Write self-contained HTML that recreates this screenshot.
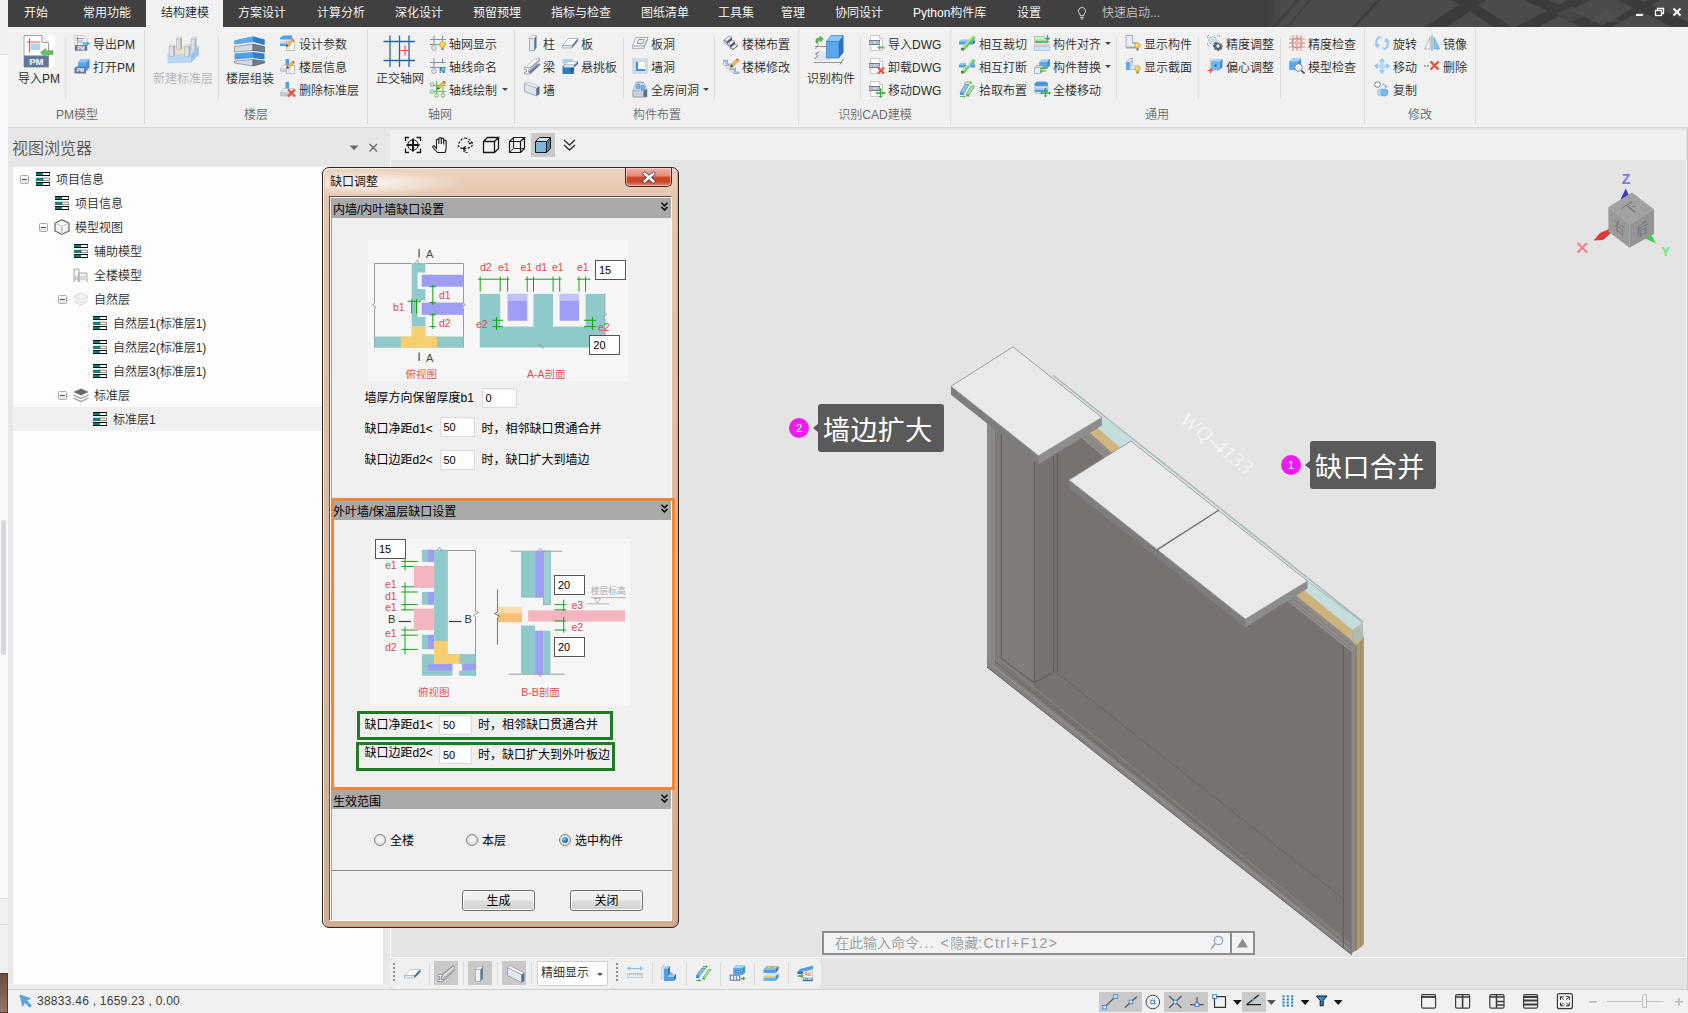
<!DOCTYPE html>
<html lang="zh-CN">
<head>
<meta charset="utf-8">
<title>结构建模 - 缺口调整</title>
<style>
*{box-sizing:border-box;margin:0;padding:0}
html,body{width:1688px;height:1013px;overflow:hidden;background:#e4e4e4}
body{position:relative;font-family:"Liberation Sans","Noto Sans CJK SC",sans-serif;font-size:12px;color:#262626;font-weight:350}
.abs{position:absolute}
svg{position:absolute;overflow:visible}
/* left background strip */
#strip{left:0;top:0;width:8px;height:1013px;background:#f9fafc}
/* tab bar */
#tabbar{left:8px;top:0;width:1680px;height:27px;background:#404040;overflow:hidden}
.tab{position:absolute;top:0;height:27px;line-height:27px;color:#fff;font-size:12px;white-space:nowrap}
#acttab{left:138px;top:0;width:77px;height:27px;background:#f1f1f1}
/* ribbon */
#ribbon{left:8px;top:27px;width:1680px;height:101px;background:#f1f1f1;border-bottom:1px solid #d9d9d9}
.rt{position:absolute;white-space:nowrap;font-size:12px;line-height:16px;color:#2b2b2b}
.rt.dis{color:#b4b4b4}
.gl{position:absolute;top:106px;white-space:nowrap;font-size:12px;line-height:16px;color:#6a6a6a;transform:translateX(-50%)}
.vs{position:absolute;width:1px;background:#dcdcdc}
.dd{position:absolute;width:0;height:0;border-left:3px solid transparent;border-right:3px solid transparent;border-top:3px solid #444}
</style>
</head>
<body>
<div id="strip" class="abs"><div class="abs" style="left:0;top:0;width:8px;height:55px;background:#f0f0f0;border-bottom:1px solid #dcdcdc"></div><div class="abs" style="left:1px;top:520px;width:5px;height:135px;background:#d5d7da;border-radius:3px"></div><div class="abs" style="left:0;top:898px;width:8px;height:76px;background:#f0f0f0;border-top:1px solid #e2e2e2"></div><div class="abs" style="left:0;top:924px;width:8px;height:1px;background:#dcdcdc"></div><div class="abs" style="left:0;top:973px;width:8px;height:40px;background:linear-gradient(180deg,#6b4c42,#94766a);border:1px solid #54382f;border-left:none"></div></div>
<div id="tabbar" class="abs">
<svg style="left:1260px;top:0" width="420" height="27" viewBox="1268 0 420 27">
<rect x="1268" y="0" width="6" height="27" fill="#434343"/><rect x="1274" y="0" width="6" height="27" fill="#474747"/><rect x="1280" y="0" width="408" height="27" fill="#4b4b4b"/>
<g fill="#3b3b3b">
<polygon points="1272,27 1276,27 1300,0 1296,0" opacity=".6"/>
<polygon points="1285,27 1288,27 1312,0 1309,0" opacity=".5"/>
<polygon points="1352,27 1356,27 1381,0 1377,0" opacity=".8"/>
<polygon points="1425,27 1447,27 1486,0 1466,0"/>
<polygon points="1452,0 1470,0 1512,27 1494,27"/>
<polygon points="1516,27 1538,27 1590,0 1568,0"/>
<polygon points="1524,0 1548,0 1606,27 1582,27"/>
<polygon points="1600,27 1612,27 1660,0 1648,0"/>
<polygon points="1618,0 1640,0 1688,22 1688,27 1672,27"/>
</g>
<g fill="#525252"><polygon points="1556,14 1572,6 1588,14 1572,22" opacity=".5"/><polygon points="1590,22 1606,10 1622,22" opacity=".6"/></g>
</svg>

<div id="acttab" class="abs"></div>
<div class="tab" style="left:16px">开始</div>
<div class="tab" style="left:75px">常用功能</div>
<div class="tab" style="left:153px;color:#1e1e1e">结构建模</div>
<div class="tab" style="left:230px">方案设计</div>
<div class="tab" style="left:309px">计算分析</div>
<div class="tab" style="left:387px">深化设计</div>
<div class="tab" style="left:465px">预留预埋</div>
<div class="tab" style="left:543px">指标与检查</div>
<div class="tab" style="left:633px">图纸清单</div>
<div class="tab" style="left:710px">工具集</div>
<div class="tab" style="left:773px">管理</div>
<div class="tab" style="left:827px">协同设计</div>
<div class="tab" style="left:905px">Python构件库</div>
<div class="tab" style="left:1009px">设置</div>
<svg style="left:1068px;top:6px" width="12" height="15" viewBox="0 0 12 15"><path d="M6 1.5a3.6 3.6 0 0 0-2 6.6v1.6h4V8.100a3.6 3.6 0 0 0-2-6.600z" fill="none" stroke="#d0d0d0" stroke-width="1"/><path d="M4.300 11.500h3.400M4.800 13h2.400" stroke="#d0d0d0" stroke-width="1"/></svg>
<div class="tab" style="left:1094px;color:#c8c8c8">快速启动...</div>
<svg style="left:1625px;top:5px" width="50" height="16" viewBox="0 0 50 16">
<rect x="3" y="9" width="7" height="2" fill="#fff"/>
<rect x="22.500" y="5.500" width="6" height="5" fill="none" stroke="#fff" stroke-width="1.300"/><path d="M24.500 5.500v-2h6v5h-2" fill="none" stroke="#fff" stroke-width="1.300"/>
<path d="M40.500 3.500l7 7M47.500 3.500l-7 7" stroke="#fff" stroke-width="1.800"/>
</svg>

</div>
<div id="ribbon" class="abs">
<svg style="left:15px;top:8px" width="32" height="32" viewBox="0 0 32 32"><rect x="0" y="0" width="32" height="32" fill="#fff"/><path d="M1 .5h18l6.500 7V32H1z" fill="#fff" stroke="#8a8a8a" stroke-width=".8"/><path d="M19 .5v7h6.500" fill="#f4f4f4" stroke="#8a8a8a" stroke-width=".8"/><path d="M6.500 3.500v14M4 7h13.500" stroke="#f0553c" stroke-width="1.200" fill="none"/><rect x="8" y="8.500" width="9" height="6.500" fill="#a8d4fa"/><rect x="1" y="20.500" width="24.500" height="11.500" fill="#64789a"/><text x="13.300" y="30" font-family="Liberation Sans,sans-serif" font-weight="bold" font-size="9.500" fill="#fff" text-anchor="middle">PM</text><path d="M17.500 17.500l5-4v2.300h7.500v3.600h-7.500v2.300z" fill="#6cc468" stroke="#3f9a3f" stroke-width=".6"/></svg><div class="rt" style="left:31px;top:44px;transform:translateX(-50%)">导入PM</div>
<div class="vs" style="left:57px;top:10px;height:62px"></div>
<svg style="left:66px;top:8px" width="16" height="16" viewBox="0 0 16 16"><path d="M1 .5h8.500l3.500 3.500V15.500H1z" fill="#fff" stroke="#b0b0b0" stroke-width=".7"/><path d="M3.500 1.500v8M2 3.500h8" stroke="#f0553c" stroke-width=".8"/><rect x="4.500" y="4.500" width="5" height="4" fill="#a8d4fa"/><rect x="1" y="10" width="12" height="5.500" fill="#64789a"/><text x="7" y="14.600" font-family="Liberation Sans,sans-serif" font-weight="bold" font-size="5" fill="#fff" text-anchor="middle">PM</text><path d="M9 7.500h4V6l3 2.500-3 2.500V9.500H9z" fill="#4f9fe6"/></svg><div class="rt" style="left:85px;top:10px">导出PM</div>
<svg style="left:66px;top:31px" width="16" height="16" viewBox="0 0 16 16"><path d="M4 4.500L7 1h8.500v8.500L12.500 13H4z" fill="#3f8fdc"/><path d="M4 4.500h8.500V13H4z" fill="#5aa9ee"/><path d="M4 4.500L7 1h8.500l-3 3.500z" fill="#8cc6f6"/><path d="M.5 10l2-1.500H12V15.500H.5z" fill="#64789a"/><text x="6.300" y="14.400" font-family="Liberation Sans,sans-serif" font-weight="bold" font-size="4.800" fill="#fff" text-anchor="middle">PM</text></svg><div class="rt" style="left:85px;top:33px">打开PM</div>
<div class="gl" style="left:69px;top:80px">PM模型</div>
<div class="vs" style="left:136px;top:3px;height:94px"></div>
<svg style="left:159px;top:10px" width="32" height="32" viewBox="0 0 32 32"><g transform="translate(0,-2.500) scale(1,1.100)"><path d="M.5 18l8-8h23.500l-8 8z" fill="#cfe4f8"/><path d="M5 17l6-6h15l-6 6z" fill="#f8e3b0"/><path d="M.5 18h23.500v8H.5z" fill="#b6d6f4"/><path d="M24 18l8-8v8l-8 8z" fill="#9cc4ea"/><g fill="#dcdfe3" stroke="#aeb4bc" stroke-width=".6"><path d="M9.500 4h4v10h-4z"/><path d="M24 4h4v10h-4z"/><path d="M2 11h4.500v9H2z"/><path d="M17.500 11h4.500v9h-4.500z"/></g><g fill="#f2f3f5" stroke="#aeb4bc" stroke-width=".5"><path d="M9.500 4l1.500-1.500h4L13.500 4z"/><path d="M24 4l1.500-1.500h4L28 4z"/><path d="M2 11l1.500-1.500h4.500L6.500 11z"/><path d="M17.500 11l1.500-1.500h4.500L22 11z"/></g><g fill="#a9afb8"><path d="M13.500 4L15 2.500v10L13.500 14z"/><path d="M28 4l1.500-1.500v10L28 14z"/><path d="M6.500 11L8 9.500v9L6.500 20z"/><path d="M22 11l1.500-1.500v9L22 20z"/></g></g></svg><div class="rt dis" style="left:175px;top:44px;transform:translateX(-50%)">新建标准层</div>
<div class="vs" style="left:210px;top:10px;height:62px"></div>
<svg style="left:226px;top:9px" width="32" height="32" viewBox="0 0 32 32"><path d="M.5 4.500L19 .5l11.500 3v5L19 5.500.5 8z" fill="#2f7fc4"/><path d="M.5 4.500L19 .5V6L.5 8.500z" fill="#5aa9ee"/><path d="M19 .5l11.500 3.500v5L19 6z" fill="#2f7fc4"/><path d="M.5 10.500L19 8v6.500L.5 16z" fill="#d3dbe6" stroke="#555" stroke-width=".5"/><path d="M19 8l11.500 2.500V16L19 14.500z" fill="#6b7c96" stroke="#444" stroke-width=".5"/><path d="M.5 17.500L19 16v6L.5 23.500z" fill="#4f9fe6"/><path d="M19 16l11.500 1.500v6L19 22z" fill="#2f7fc4"/><path d="M.5 25L19 23.500V30L.5 27z" fill="#d3dbe6" stroke="#555" stroke-width=".5"/><path d="M19 23.500l11.500 1.500V27L19 30z" fill="#6b7c96" stroke="#444" stroke-width=".5"/></svg><div class="rt" style="left:242px;top:44px;transform:translateX(-50%)">楼层组装</div>
<svg style="left:272px;top:8px" width="16" height="16" viewBox="0 0 16 16"><path d="M0 3l3-2.500h9v4H0z" fill="#4f9fe6"/><path d="M0 5.500h12V8H0z" fill="#d3dbe6"/><path d="M0 8.500h7V11H0z" fill="#4f9fe6"/><rect x="6.500" y="6.500" width="8" height="9" fill="#fff" stroke="#9aa4b2" stroke-width=".7"/><path d="M8 9h3M8 11h3M8 13h2" stroke="#9ab" stroke-width=".7"/><g transform="translate(-2.500,-.5) scale(.95)"><path d="M9 13l.8-2.800 5-5 2 2-5 5z" fill="#f6b94a" stroke="#b77a1a" stroke-width=".5"/><path d="M14.800 5.200l1-1 2 2-1 1z" fill="#e8503a"/><path d="M9 13l.8-2.800 2 2z" fill="#444"/></g></svg><div class="rt" style="left:291px;top:10px">设计参数</div>
<svg style="left:272px;top:31px" width="16" height="16" viewBox="0 0 16 16"><path d="M5.500 1h3.500v7H5.500z" fill="#4f9fe6"/><path d="M0 11l3-4h10l-3 4z" fill="#e8edf3" stroke="#9aa4b2" stroke-width=".5"/><path d="M0 11h10v3H0z" fill="#c5ced9"/><rect x="6.500" y="7.500" width="8" height="8" fill="#fff" stroke="#9aa4b2" stroke-width=".7"/><path d="M8 10h3M8 12h3M8 14h2" stroke="#9ab" stroke-width=".7"/><g transform="translate(-2,-1.500) scale(.95)"><path d="M9 13l.8-2.800 5-5 2 2-5 5z" fill="#f6b94a" stroke="#b77a1a" stroke-width=".5"/><path d="M14.800 5.200l1-1 2 2-1 1z" fill="#e8503a"/><path d="M9 13l.8-2.800 2 2z" fill="#444"/></g></svg><div class="rt" style="left:291px;top:33px">楼层信息</div>
<svg style="left:272px;top:54px" width="16" height="16" viewBox="0 0 16 16"><path d="M5.500 1h3.500v8H5.500z" fill="#4f9fe6"/><path d="M.5 12l3-4.500h10l-3 4.500z" fill="#e8edf3" stroke="#9aa4b2" stroke-width=".5"/><path d="M.5 12h10v3H.5z" fill="#c5ced9" stroke="#9aa4b2" stroke-width=".4"/><path d="M8 8.500l7 7M15 8.500l-7 7" stroke="#e8503a" stroke-width="2.300"/></svg><div class="rt" style="left:291px;top:56px">删除标准层</div>
<div class="gl" style="left:248px;top:80px">楼层</div>
<div class="vs" style="left:359px;top:3px;height:94px"></div>
<svg style="left:375px;top:8px" width="32" height="32" viewBox="0 0 32 32"><g stroke="#2a64a0" stroke-width="1.300" fill="none"><path d="M7 .5v31.500M16.500 .5v31.500M26 .5v31.500M.5 6.500h31.500M.5 25.500h31.500"/></g><path d="M22 10.500v10M17 15.500h10" stroke="#f0553c" stroke-width="1.200"/></svg><div class="rt" style="left:392px;top:44px;transform:translateX(-50%)">正交轴网</div>
<svg style="left:422px;top:8px" width="16" height="16" viewBox="0 0 16 16"><path d="M0 4.500h16M0 9.500h16M4 .5v10M12.500 .5v8" stroke="#7f93ad" stroke-width="1" fill="none"/><circle cx="4" cy="13" r="2.300" fill="#fff" stroke="#8a8f98" stroke-width=".8"/><path d="M4 12v2" stroke="#8a8f98" stroke-width=".6"/><circle cx="12.500" cy="9.500" r="3" fill="#fbc94a" stroke="#d99a1c" stroke-width=".6"/><circle cx="11.800" cy="8.700" r="1" fill="#fff3c8"/><path d="M11.200 12.500h2.600v2.500h-2.600z" fill="#8a8f98"/></svg><div class="rt" style="left:441px;top:10px">轴网显示</div>
<svg style="left:422px;top:31px" width="16" height="16" viewBox="0 0 16 16"><path d="M0 4.500h16M0 9.500h16M4 .5v10M12.500 .5v5" stroke="#7f93ad" stroke-width="1" fill="none"/><circle cx="4" cy="13" r="2.300" fill="#fff" stroke="#8a8f98" stroke-width=".8"/><path d="M4 12v2" stroke="#8a8f98" stroke-width=".6"/><text x="12" y="14.500" font-family="Liberation Sans,sans-serif" font-weight="bold" font-size="8.500" fill="#2a6fc0" text-anchor="middle">N</text></svg><div class="rt" style="left:441px;top:33px">轴线命名</div>
<svg style="left:422px;top:54px" width="16" height="16" viewBox="0 0 16 16"><path d="M0 4.500h16M0 10.500h16M6.500 0v16M13 6v10" stroke="#5cbf58" stroke-width="1" fill="none"/><g fill="#fff" stroke="#777" stroke-width=".8"><circle cx="2" cy="3.500" r="1.700"/><circle cx="13" cy="14.500" r="1.700"/></g><g fill="#fff" stroke="#3aa83a" stroke-width=".8"><circle cx="2" cy="10.500" r="1.700"/><circle cx="6.500" cy="14.500" r="1.700"/></g><g transform="translate(-2,-4.500)"><path d="M9 13l.8-2.800 5-5 2 2-5 5z" fill="#f6b94a" stroke="#b77a1a" stroke-width=".5"/><path d="M14.800 5.200l1-1 2 2-1 1z" fill="#e8503a"/><path d="M9 13l.8-2.800 2 2z" fill="#444"/></g></svg><div class="rt" style="left:441px;top:56px">轴线绘制</div>
<div class="dd" style="left:494px;top:61px"></div>
<div class="gl" style="left:432px;top:80px">轴网</div>
<div class="vs" style="left:506px;top:3px;height:94px"></div>
<svg style="left:516px;top:8px" width="16" height="16" viewBox="0 0 16 16"><path d="M5.500 3.500h5v12h-5z" fill="#e3e9f1" stroke="#8e98a8" stroke-width=".7"/><path d="M5.500 3.500l2-3h5l-2 3z" fill="#fff" stroke="#8e98a8" stroke-width=".6"/><path d="M10.500 3.500l2-3v12l-2 3z" fill="#5d7394"/></svg><div class="rt" style="left:535px;top:10px">柱</div>
<svg style="left:554px;top:8px" width="16" height="16" viewBox="0 0 16 16"><path d="M.5 10.500l6-7h9.500l-6 7z" fill="#fff" stroke="#8e98a8" stroke-width=".7"/><path d="M.5 10.500H10v2.500H.5z" fill="#e3e9f1" stroke="#8e98a8" stroke-width=".6"/><path d="M10 10.500l6-7V6l-6 7z" fill="#5d7394"/></svg><div class="rt" style="left:573px;top:10px">板</div>
<svg style="left:516px;top:31px" width="16" height="16" viewBox="0 0 16 16"><path d="M1 9.500L11 .5h5L6.500 9.500z" fill="#fff" stroke="#8e98a8" stroke-width=".6"/><path d="M.5 9.500h6v2h-2v2.500h2v2h-6v-2h2V11.500h-2z" fill="#eef1f5" stroke="#7a8494" stroke-width=".6"/><path d="M6.500 9.500L16 .5V2.500L6.500 11.500z" fill="#9aa4b4"/><path d="M4.500 14L14 5v2l-7.500 7.500v1.500z" fill="#7a8699"/><path d="M6.500 14L16 5v2l-9.500 9z" fill="#5d7394"/></svg><div class="rt" style="left:535px;top:33px">梁</div>
<svg style="left:554px;top:31px" width="16" height="16" viewBox="0 0 16 16"><path d="M.5 1h11l-3 4.500h-8z" fill="#a8d4fa"/><path d="M.5 8l8-1.500 3.500 1.500v8H.5z" fill="#2f7fc4"/><path d="M8.500 9.500l3.500-4V12l-3.500 4z" fill="#1f5f9c"/><path d="M2 7l4-3.500h10l-4 3.500z" fill="#fff" stroke="#8e98a8" stroke-width=".6"/><path d="M2 7h10v2.500H2z" fill="#e3e9f1" stroke="#8e98a8" stroke-width=".5"/><path d="M12 7l4-3.500V6l-4 3.500z" fill="#5d7394"/></svg><div class="rt" style="left:573px;top:33px">悬挑板</div>
<svg style="left:516px;top:54px" width="16" height="16" viewBox="0 0 16 16"><path d="M.5 2.500l12 4.500v8L.5 10.500z" fill="#dfe5ee" stroke="#8e98a8" stroke-width=".8"/><path d="M.5 2.500L3.500 1l12 4.500-3 1.500z" fill="#fff" stroke="#8e98a8" stroke-width=".6"/><path d="M12.500 7l3-1.500v8l-3 1.500z" fill="#5d7394"/></svg><div class="rt" style="left:535px;top:56px">墙</div>
<div class="vs" style="left:615px;top:10px;height:62px"></div>
<svg style="left:624px;top:8px" width="16" height="16" viewBox="0 0 16 16"><path d="M.5 11l3.500-8.500H16L12 11z" fill="#fff" stroke="#8e98a8" stroke-width=".8"/><path d="M5 8.500l1.500-4h6l-1.500 4z" fill="#e8ecf2" stroke="#7a8494" stroke-width=".8"/><path d="M.5 11H12v2.500H.5z" fill="#e3e9f1" stroke="#8e98a8" stroke-width=".6"/><path d="M12 11l4-8.500V5l-4 8.500z" fill="#9aa4b4"/></svg><div class="rt" style="left:643px;top:10px">板洞</div>
<svg style="left:624px;top:31px" width="16" height="16" viewBox="0 0 16 16"><rect x="0" y="0" width="16" height="16" fill="#d6dde8"/><path d="M0 3.500h16M0 8h16M0 12.500h16M3 0v16M8 0v16M13 0v16" stroke="#c2cad6" stroke-width=".6"/><rect x="4" y="4" width="9" height="9" fill="#fff"/><path d="M4 4h2v7h7v2H4z" fill="#3f8fdc"/></svg><div class="rt" style="left:643px;top:33px">墙洞</div>
<svg style="left:624px;top:54px" width="16" height="16" viewBox="0 0 16 16"><path d="M1 9l3-7.500h8L15 9v7H1z" fill="#d8dee8" stroke="#8e98a8" stroke-width=".6"/><path d="M4.500 3h3.500v4.500H4.500zM9 4.500h3.500v4H9z" fill="#6eb2ee" stroke="#3f8fdc" stroke-width=".5"/><path d="M1 9.500h10.500V16H1z" fill="#c9d1dd" stroke="#8e98a8" stroke-width=".6"/><path d="M11.500 9.500L15 8v8h-3.500z" fill="#5d7394"/><path d="M3.500 1.500L7 .5l5 1" fill="none" stroke="#8e98a8" stroke-width=".6"/></svg><div class="rt" style="left:643px;top:56px">全房间洞</div>
<div class="dd" style="left:695px;top:61px"></div>
<div class="vs" style="left:706px;top:10px;height:62px"></div>
<svg style="left:715px;top:8px" width="16" height="16" viewBox="0 0 16 16"><path d="M1 5l5-4 3 1.500L4 6.500z" fill="#eef1f5" stroke="#5a6474" stroke-width=".6"/><path d="M4 6.500l5-4v2.500L4 9z" fill="#4a5466"/><path d="M4 9l5-4 3 1.500-5 4z" fill="#eef1f5" stroke="#5a6474" stroke-width=".6"/><path d="M7 10.500l5-4V9l-5 4z" fill="#4a5466"/><path d="M7 13l5-4 3 1.500-5 4z" fill="#eef1f5" stroke="#5a6474" stroke-width=".6"/><path d="M1 5v2.500l9 7 5-4V10.500l-5 4z" fill="#c9d1dd" stroke="#5a6474" stroke-width=".5"/></svg><div class="rt" style="left:734px;top:10px">楼梯布置</div>
<svg style="left:715px;top:31px" width="16" height="16" viewBox="0 0 16 16"><path d="M.5 2h4v4h4v4h4v4h3.500v1.500h-5v-4h-4v-4h-4v-4H.5z" fill="#b6d6f4" stroke="#6a8fb8" stroke-width=".6"/><path d="M.5 2v5l11 9" fill="none" stroke="#e0a0a0" stroke-width=".8"/><g transform="translate(-1.500,-4)"><path d="M9 13l.8-2.800 5-5 2 2-5 5z" fill="#f6b94a" stroke="#b77a1a" stroke-width=".5"/><path d="M14.800 5.200l1-1 2 2-1 1z" fill="#e8503a"/><path d="M9 13l.8-2.800 2 2z" fill="#444"/></g></svg><div class="rt" style="left:734px;top:33px">楼梯修改</div>
<div class="gl" style="left:649px;top:80px">构件布置</div>
<div class="vs" style="left:790px;top:3px;height:94px"></div>
<svg style="left:806px;top:8px" width="32" height="32" viewBox="0 0 32 32"><path d="M0 25.500l4-8h16l-3.500 8z" fill="#dde3ea"/><path d="M0 27.500h28M1 11.500h12" stroke="#8a8a8a" stroke-width=".9"/><path d="M26 29.500l3.500-6M1.500 14l3-5" stroke="#8a8a8a" stroke-width=".9"/><path d="M.5 24l3-3.500-2-1.500 4-2.500" fill="none" stroke="#777" stroke-width=".9"/><path d="M12.500 6.500h12.500v16.500H12.500z" fill="#5aa9ee" stroke="#2b6fb4" stroke-width=".6"/><path d="M12.500 6.500l4.500-6h12.500l-4.500 6z" fill="#8cc6f6" stroke="#2b6fb4" stroke-width=".6"/><path d="M25 6.500l4.500-6v17L25 23z" fill="#2f74b8"/><path d="M2 8V5.500c0-1.500 1-2.500 2.500-2.500H6V1l3.500 3L6 7V5.200H4.800c-.6 0-.8.300-.8.800V8z" fill="#5cbf58" stroke="#2f8a2f" stroke-width=".5"/></svg><div class="rt" style="left:823px;top:44px;transform:translateX(-50%)">识别构件</div>
<div class="vs" style="left:852px;top:10px;height:62px"></div>
<svg style="left:861px;top:8px" width="16" height="16" viewBox="0 0 16 16"><path d="M1.500 .5h9l3 3V15.500H1.500z" fill="#fff" stroke="#b4b4b4" stroke-width=".7"/><path d="M10.500 .5v3h3" fill="#f0f0f0" stroke="#b4b4b4" stroke-width=".7"/><rect x="0" y="5" width="11" height="5" fill="#6a7b98"/><text x="5.500" y="9.200" font-family="Liberation Sans,sans-serif" font-weight="bold" font-size="4.200" fill="#fff" text-anchor="middle">DWG</text><path d="M8 12.500l3-2.500v1.500h4.500v2H11V15z" fill="#5cbf58"/></svg><div class="rt" style="left:880px;top:10px">导入DWG</div>
<svg style="left:861px;top:31px" width="16" height="16" viewBox="0 0 16 16"><path d="M1.500 .5h9l3 3V15.500H1.500z" fill="#fff" stroke="#b4b4b4" stroke-width=".7"/><path d="M10.500 .5v3h3" fill="#f0f0f0" stroke="#b4b4b4" stroke-width=".7"/><rect x="0" y="5" width="11" height="5" fill="#6a7b98"/><text x="5.500" y="9.200" font-family="Liberation Sans,sans-serif" font-weight="bold" font-size="4.200" fill="#fff" text-anchor="middle">DWG</text><path d="M9 9.500l6 6M15 9.500l-6 6" stroke="#e8503a" stroke-width="2.200"/></svg><div class="rt" style="left:880px;top:33px">卸载DWG</div>
<svg style="left:861px;top:54px" width="16" height="16" viewBox="0 0 16 16"><path d="M1.500 .5h9l3 3V15.500H1.500z" fill="#fff" stroke="#b4b4b4" stroke-width=".7"/><path d="M10.500 .5v3h3" fill="#f0f0f0" stroke="#b4b4b4" stroke-width=".7"/><rect x="0" y="5" width="11" height="5" fill="#6a7b98"/><text x="5.500" y="9.200" font-family="Liberation Sans,sans-serif" font-weight="bold" font-size="4.200" fill="#fff" text-anchor="middle">DWG</text><path d="M11.500 8v8M7.500 12h8" stroke="#3aa83a" stroke-width="1.400"/><path d="M11.500 7l-1.800 2h3.600zM11.500 17l-1.800-2h3.600zM6.500 12l2-1.800v3.600zM16.500 12l-2-1.800v3.600z" fill="#3aa83a"/></svg><div class="rt" style="left:880px;top:56px">移动DWG</div>
<div class="gl" style="left:867px;top:80px">识别CAD建模</div>
<div class="vs" style="left:942px;top:3px;height:94px"></div>
<svg style="left:951px;top:8px" width="16" height="16" viewBox="0 0 16 16"><path d="M0 6.500l2-2h14l-2 2z" fill="#8cc6f6"/><path d="M0 6.500h14v3H0z" fill="#4f9fe6"/><path d="M14 6.500l2-2v3l-2 2z" fill="#2f74b8"/><path d="M2 13L13 1h3L5 13z" fill="#a9e09a"/><path d="M2 13h3v2.500H2z" fill="#3f9a3f"/><path d="M5 13L16 1v2.500L5 15.500z" fill="#5cbf58"/></svg><div class="rt" style="left:971px;top:10px">相互裁切</div>
<svg style="left:1026px;top:8px" width="16" height="16" viewBox="0 0 16 16"><rect x=".5" y="1.500" width="10" height="2.500" fill="#eaf6e6" stroke="#7fbf72" stroke-width=".7"/><rect x=".5" y="5.500" width="14" height="2.500" fill="#5cbf58"/><rect x=".5" y="9" width="15" height="2" fill="#f6d8d4" stroke="#e0a09a" stroke-width=".5"/><rect x=".5" y="11.500" width="15" height="4" fill="#cfe4f8" stroke="#8cb8e0" stroke-width=".6"/><path d="M13.500 0v4.500M11.500 3l2 2.500 2-2.500z" fill="#3f8fdc" stroke="#3f8fdc" stroke-width="1"/></svg><div class="rt" style="left:1045px;top:10px">构件对齐</div>
<div class="dd" style="left:1097px;top:15px"></div>
<svg style="left:951px;top:31px" width="16" height="16" viewBox="0 0 16 16"><path d="M0 7l2-2h5v4.500H0z" fill="#4f9fe6"/><path d="M10 5h6v4.500h-5z" fill="#4f9fe6"/><path d="M0 7l2-2h5l-1 2zM10 5h6l-1.500 2h-5z" fill="#8cc6f6"/><path d="M2 13L7.500 7l2.500.5L5 13zM9.500 5.500L13 1h3l-4 4.500z" fill="#a9e09a"/><path d="M2 13h3v2.500H2z" fill="#3f9a3f"/><path d="M5 13l5-5.500V10L5 15.500zM12 5.500L16 1v2.500l-4 4.500z" fill="#5cbf58"/></svg><div class="rt" style="left:971px;top:33px">相互打断</div>
<svg style="left:1026px;top:31px" width="16" height="16" viewBox="0 0 16 16"><path d="M5.500 4l3-3h7.500v6.500l-3 3H5.500z" fill="#3f8fdc"/><path d="M5.500 4h7.500v6.500H5.500z" fill="#5aa9ee"/><path d="M5.500 4l3-3h7.500l-3 3z" fill="#a8d4fa"/><path d="M.5 9.500l2-2h6v6l-2 2h-6z" fill="#c5ced9" stroke="#8e98a8" stroke-width=".5"/><path d="M.5 9.500h6v6h-6z" fill="#e8edf3" stroke="#8e98a8" stroke-width=".5"/><path d="M6.500 10.500h6l-1.500-1.500M12 13H6l1.500 1.500" fill="none" stroke="#3aa83a" stroke-width="1"/></svg><div class="rt" style="left:1045px;top:33px">构件替换</div>
<div class="dd" style="left:1097px;top:38px"></div>
<svg style="left:951px;top:54px" width="16" height="16" viewBox="0 0 16 16"><path d="M1 12L6 3.500h4L5 12z" fill="#8cc6f6" stroke="#2f74b8" stroke-width=".6"/><path d="M1 12h4v2H1z" fill="#4f9fe6"/><path d="M7 13.500L12 5h3.500L10.500 13.500z" fill="#a9e09a" stroke="#3f9a3f" stroke-width=".6"/><path d="M7 13.500h3.500v2H7z" fill="#5cbf58"/><path d="M5 2.500c2-2 5-2 7.500-.5L11.500 .5M12.500 2L11 3.500" fill="none" stroke="#3aa83a" stroke-width=".9"/><path d="M1 15.500h5l-1.200-1.200M6 15.500l-1.200 1" fill="none" stroke="#3aa83a" stroke-width=".8"/></svg><div class="rt" style="left:971px;top:56px">拾取布置</div>
<svg style="left:1026px;top:54px" width="16" height="16" viewBox="0 0 16 16"><path d="M.5 3l2-2.500h9.500l2 2V5H.5z" fill="#4f9fe6"/><path d="M.5 3h11.500l2-.5" stroke="#2f74b8" stroke-width=".5" fill="none"/><path d="M.5 5.500h13.500V8H.5z" fill="#d3dbe6" stroke="#8e98a8" stroke-width=".4"/><path d="M.5 8.500h13.500V11H.5z" fill="#4f9fe6"/><path d="M.5 11.500H9V13H.5z" fill="#c5ced9"/><path d="M11.500 7.500v8.500M7 12h9" stroke="#3aa83a" stroke-width="1.300"/><path d="M11.500 6.500L9.800 8.500h3.400zM11.500 16.500l-1.700-2h3.400zM6 12l2-1.700v3.400zM17 12l-2-1.700v3.400z" fill="#3aa83a"/></svg><div class="rt" style="left:1045px;top:56px">全楼移动</div>
<div class="vs" style="left:1108px;top:10px;height:62px"></div>
<svg style="left:1117px;top:8px" width="16" height="16" viewBox="0 0 16 16"><path d="M1 .5h4.500l2-0 0 8h6V12H1z" fill="#e8edf3" stroke="#8e98a8" stroke-width=".7"/><path d="M5.500 .5L8 2v6.500h5.500L11 7H7.500V2z" fill="#aab4c4"/><path d="M1 12h12.500v1.500H1z" fill="#9aa4b4"/><circle cx="12.500" cy="10.500" r="2.800" fill="#fbc94a" stroke="#d99a1c" stroke-width=".6"/><circle cx="11.800" cy="9.700" r=".9" fill="#fff3c8"/><path d="M11.300 13.300h2.400v2.200h-2.400z" fill="#7a8494"/></svg><div class="rt" style="left:1136px;top:10px">显示构件</div>
<svg style="left:1117px;top:31px" width="16" height="16" viewBox="0 0 16 16"><path d="M1 4.500L5 .5h3v7h5.500L13 12H1z" fill="#4f9fe6"/><path d="M1 4.500L5 .5h3L4.500 4.500z" fill="#e8edf3" stroke="#8e98a8" stroke-width=".5"/><path d="M4.500 4.500L8 .5v7l-3.500 4z" fill="#c5ced9"/><path d="M1 4.500h3.500V12H1z" fill="#5aa9ee"/><path d="M4.500 11.500L8 7.500h5.500L10 11.500z" fill="#e8edf3"/><circle cx="12.500" cy="10.500" r="2.800" fill="#fbc94a" stroke="#d99a1c" stroke-width=".6"/><circle cx="11.800" cy="9.700" r=".9" fill="#fff3c8"/><path d="M11.300 13.300h2.400v2.200h-2.400z" fill="#7a8494"/></svg><div class="rt" style="left:1136px;top:33px">显示截面</div>
<div class="vs" style="left:1190px;top:10px;height:62px"></div>
<svg style="left:1199px;top:8px" width="16" height="16" viewBox="0 0 16 16"><path d="M.5 3V.5H3M10 .5h2.500V3M.5 8v2.500H3" fill="none" stroke="#8a8f98" stroke-width=".8" stroke-dasharray="1.500 1"/><circle cx="5.500" cy="5.500" r="3.800" fill="#eaf3fc" stroke="#7fb0e0" stroke-width=".8"/><circle cx="5.500" cy="5.500" r="1.500" fill="none" stroke="#7fb0e0" stroke-width=".7"/><g transform="translate(11,11)"><path d="M-1-5h2l.4 1.400 1.300.6 1.300-.7 1.400 1.400-.7 1.300.6 1.300L7-1v2l-1.400.4-.6 1.300.7 1.300-1.400 1.400-1.300-.7-1.300.6L1 7h-2l-.4-1.400-1.300-.6-1.300.7-1.400-1.400.7-1.300-.6-1.300L-7 1v-2l1.400-.4.6-1.300-.7-1.300 1.400-1.400 1.300.7 1.300-.6z" transform="scale(.72)" fill="#555d6b"/><circle r="1.700" fill="#f1f1f1"/></g></svg><div class="rt" style="left:1218px;top:10px">精度调整</div>
<svg style="left:1199px;top:31px" width="16" height="16" viewBox="0 0 16 16"><path d="M4 3.500L6.500 1H15.500v8L13 11.500H4z" fill="#3f8fdc"/><path d="M4 3.500h9v8H4z" fill="#6eb2ee"/><path d="M4 3.500L6.500 1h9L13 3.500z" fill="#a8d4fa"/><rect x="7.500" y="6.500" width="2" height="2" fill="#2a5fa0"/><path d="M0 12.500h13M3.500 0v16" stroke="#9aa4b4" stroke-width=".7" stroke-dasharray="1.500 1"/><path d="M1 12.500h5M3.500 10v5" stroke="#e8503a" stroke-width="1"/><circle cx="3.500" cy="12.500" r="1.300" fill="#e8503a"/></svg><div class="rt" style="left:1218px;top:33px">偏心调整</div>
<div class="vs" style="left:1272px;top:10px;height:62px"></div>
<svg style="left:1281px;top:8px" width="16" height="16" viewBox="0 0 16 16"><rect x="0" y="0" width="16" height="16" fill="#ececec"/><g stroke="#f08a7a" stroke-width="1"><path d="M4 0v16M8 0v16M12 0v16M0 4h16M0 8h16M0 12h16"/></g><circle cx="8" cy="8" r="5" fill="none" stroke="#8a8f98" stroke-width=".8"/><rect x="6" y="6" width="4" height="4" fill="#f6b0a6"/></svg><div class="rt" style="left:1300px;top:10px">精度检查</div>
<svg style="left:1281px;top:31px" width="16" height="16" viewBox="0 0 16 16"><path d="M.5 3.500L3.500 .5h8.500v8.500l-3 3H.5z" fill="#3f8fdc"/><path d="M.5 3.500H9V12H.5z" fill="#5aa9ee"/><path d="M.5 3.500L3.500 .5H12L9 3.500z" fill="#a8d4fa"/><circle cx="9.500" cy="9.500" r="3.800" fill="#eef6fd" stroke="#7a8494" stroke-width="1"/><path d="M12.300 12.300l3.200 3.200" stroke="#555d6b" stroke-width="1.800"/></svg><div class="rt" style="left:1300px;top:33px">模型检查</div>
<div class="gl" style="left:1149px;top:80px">通用</div>
<div class="vs" style="left:1356px;top:3px;height:94px"></div>
<svg style="left:1366px;top:8px" width="16" height="16" viewBox="0 0 16 16"><path d="M6.500 1.500C2.500 2.500 1 7 3 11" fill="none" stroke="#93c6f2" stroke-width="2"/><path d="M.5 9.500l3 4 2.500-4.500z" fill="#93c6f2"/><path d="M9.500 14.500c4-1 5.500-5.500 3.500-9.500" fill="none" stroke="#93c6f2" stroke-width="2"/><path d="M15.500 6.500l-3-4-2.500 4.500z" fill="#93c6f2"/><path d="M5 1l4 1.500-2 2zM11 15l-4-1.500 2-2z" fill="#b8dcfa"/></svg><div class="rt" style="left:1385px;top:10px">旋转</div>
<svg style="left:1416px;top:8px" width="16" height="16" viewBox="0 0 16 16"><path d="M8 0v16" stroke="#8a8f98" stroke-width="1"/><path d="M6 2.500V14H.5z" fill="#fafafa" stroke="#9a9fa8" stroke-width=".7"/><path d="M10 2.500V14h5.500z" fill="#8cc6f6" stroke="#4f9fe6" stroke-width=".8"/></svg><div class="rt" style="left:1435px;top:10px">镜像</div>
<svg style="left:1366px;top:31px" width="16" height="16" viewBox="0 0 16 16"><path d="M8 2v12M2 8h12" stroke="#8fc4f0" stroke-width="2.600"/><path d="M8 0L5 4h6zM8 16l-3-4h6zM0 8l4-3v6zM16 8l-4-3v6z" fill="#8fc4f0"/><path d="M8 3v10M3 8h10" stroke="#d4eafb" stroke-width="1"/></svg><div class="rt" style="left:1385px;top:33px">移动</div>
<svg style="left:1416px;top:31px" width="16" height="16" viewBox="0 0 16 16"><path d="M0 8h5" stroke="#8a8f98" stroke-width="1.400" stroke-dasharray="2 1"/><path d="M6.500 3.500l8 8M14.500 3.500l-8 8" stroke="#e8503a" stroke-width="2.400"/></svg><div class="rt" style="left:1435px;top:33px">删除</div>
<svg style="left:1366px;top:54px" width="16" height="16" viewBox="0 0 16 16"><circle cx="3.500" cy="3.500" r="2.800" fill="#fff" stroke="#555" stroke-width=".8"/><circle cx="7" cy="11.500" r="3.600" fill="#a8d4fa" stroke="#7db8ee" stroke-width=".6"/><circle cx="10.500" cy="11.500" r="3.600" fill="#7db8ee" stroke="#5a9fdc" stroke-width=".6"/><path d="M8 3c2 0 3.500 1 4 3" fill="none" stroke="#4f9fe6" stroke-width="1"/><path d="M10.500 5.500l1.700 1.500 1.300-2z" fill="#4f9fe6"/></svg><div class="rt" style="left:1385px;top:56px">复制</div>
<div class="gl" style="left:1412px;top:80px">修改</div>
<div class="vs" style="left:1467px;top:3px;height:94px"></div>
</div>
<style>
#lp{left:8px;top:128px;width:382px;height:861px;background:#e7e7e7}
#lph{left:4px;top:11px;font-size:16px;line-height:20px;color:#555;white-space:nowrap}
#tree{left:5px;top:39px;width:370px;height:817px;background:#fdfdfd}
.tr{position:absolute;left:0;width:370px;height:24px}
.tr.sel{background:#f0f0f0}
.tt{position:absolute;top:5px;font-size:12px;line-height:16px;white-space:nowrap;color:#2b2b2b}
.ex{position:absolute;top:8px;width:9px;height:9px;border:1px solid #a9a9a9;border-radius:1.5px;background:linear-gradient(#fff,#e4e4e4)}
.ex:after{content:"";position:absolute;left:1px;top:3px;width:5px;height:1px;background:#3a47a8}
</style>
<div id="lp" class="abs">
<div id="lph" class="abs">视图浏览器</div>
<svg style="left:341px;top:15px" width="30" height="10" viewBox="0 0 30 10"><path d="M0.500 2.500h9l-4.500 4.500z" fill="#666"/><path d="M20.500 1l7.500 7.500M28 1l-7.500 7.500" stroke="#6a6a6a" stroke-width="1.400"/></svg>
<div id="tree" class="abs">
<div class="tr" style="top:0px"><div class="ex" style="left:7px"></div><svg style="left:23px;top:5px" width="14" height="14" viewBox="0 0 14 14"><rect x="0" y="0" width="14" height="4" fill="#0a0a0a"/><rect x="0" y="1" width="7" height="2" fill="#0e8080"/><rect x="7" y="1" width="6.300" height="2" fill="#fff"/><rect x="0" y="5.800" width="7" height="3.200" fill="#0e8080"/><rect x="7" y="6.100" width="6.600" height="2.600" fill="#fff" stroke="#444" stroke-width=".6"/><rect x="0" y="10" width="14" height="4" fill="#0a0a0a"/><rect x="0" y="11" width="7" height="2" fill="#0e8080"/><rect x="7" y="11" width="6.300" height="2" fill="#fff"/></svg><div class="tt" style="left:43px">项目信息</div></div>
<div class="tr" style="top:24px"><svg style="left:42px;top:5px" width="14" height="14" viewBox="0 0 14 14"><rect x="0" y="0" width="14" height="4" fill="#0a0a0a"/><rect x="0" y="1" width="7" height="2" fill="#0e8080"/><rect x="7" y="1" width="6.300" height="2" fill="#fff"/><rect x="0" y="5.800" width="7" height="3.200" fill="#0e8080"/><rect x="7" y="6.100" width="6.600" height="2.600" fill="#fff" stroke="#444" stroke-width=".6"/><rect x="0" y="10" width="14" height="4" fill="#0a0a0a"/><rect x="0" y="11" width="7" height="2" fill="#0e8080"/><rect x="7" y="11" width="6.300" height="2" fill="#fff"/></svg><div class="tt" style="left:62px">项目信息</div></div>
<div class="tr" style="top:48px"><div class="ex" style="left:26px"></div><svg style="left:41px;top:4px" width="16" height="16" viewBox="0 0 16 16"><path d="M8 .8L15 4v8L8 15.500 1 12V4z" fill="#fafafa" stroke="#555" stroke-width="1.100"/><path d="M1 4L8 7.300 15 4" fill="none" stroke="#bbb" stroke-width="1"/><path d="M8 7.300v8" stroke="#c8c8c8" stroke-width="2"/><path d="M3 10.500l.1 0M5 12l.1 0M11 12l.1 0M13 10.500l.1 0" stroke="#aaa" stroke-width="1" stroke-linecap="round"/></svg><div class="tt" style="left:62px">模型视图</div></div>
<div class="tr" style="top:72px"><svg style="left:61px;top:5px" width="14" height="14" viewBox="0 0 14 14"><rect x="0" y="0" width="14" height="4" fill="#0a0a0a"/><rect x="0" y="1" width="7" height="2" fill="#0e8080"/><rect x="7" y="1" width="6.300" height="2" fill="#fff"/><rect x="0" y="5.800" width="7" height="3.200" fill="#0e8080"/><rect x="7" y="6.100" width="6.600" height="2.600" fill="#fff" stroke="#444" stroke-width=".6"/><rect x="0" y="10" width="14" height="4" fill="#0a0a0a"/><rect x="0" y="11" width="7" height="2" fill="#0e8080"/><rect x="7" y="11" width="6.300" height="2" fill="#fff"/></svg><div class="tt" style="left:81px">辅助模型</div></div>
<div class="tr" style="top:96px"><svg style="left:60px;top:4px" width="16" height="16" viewBox="0 0 16 16"><path d="M1 15V2h5v13M6 15V6h8v9" fill="#f2f2f2" stroke="#aaa" stroke-width="1"/><path d="M2.500 9v4M4.500 9v4M8 9v4M10 9v4M12 9v4" stroke="#bbb" stroke-width="1"/></svg><div class="tt" style="left:81px">全楼模型</div></div>
<div class="tr" style="top:120px"><div class="ex" style="left:45px"></div><svg style="left:60px;top:4px" width="16" height="16" viewBox="0 0 16 16"><path d="M8 2l7 3.500-7 3.500-7-3.500z" fill="#f4f4f4" stroke="#ccc" stroke-width=".8"/><path d="M1 8l7 3.500 7-3.500M1 10.500l7 3.500 7-3.500" fill="none" stroke="#d4d4d4" stroke-width=".9"/></svg><div class="tt" style="left:81px">自然层</div></div>
<div class="tr" style="top:144px"><svg style="left:80px;top:5px" width="14" height="14" viewBox="0 0 14 14"><rect x="0" y="0" width="14" height="4" fill="#0a0a0a"/><rect x="0" y="1" width="7" height="2" fill="#0e8080"/><rect x="7" y="1" width="6.300" height="2" fill="#fff"/><rect x="0" y="5.800" width="7" height="3.200" fill="#0e8080"/><rect x="7" y="6.100" width="6.600" height="2.600" fill="#fff" stroke="#444" stroke-width=".6"/><rect x="0" y="10" width="14" height="4" fill="#0a0a0a"/><rect x="0" y="11" width="7" height="2" fill="#0e8080"/><rect x="7" y="11" width="6.300" height="2" fill="#fff"/></svg><div class="tt" style="left:100px">自然层1(标准层1)</div></div>
<div class="tr" style="top:168px"><svg style="left:80px;top:5px" width="14" height="14" viewBox="0 0 14 14"><rect x="0" y="0" width="14" height="4" fill="#0a0a0a"/><rect x="0" y="1" width="7" height="2" fill="#0e8080"/><rect x="7" y="1" width="6.300" height="2" fill="#fff"/><rect x="0" y="5.800" width="7" height="3.200" fill="#0e8080"/><rect x="7" y="6.100" width="6.600" height="2.600" fill="#fff" stroke="#444" stroke-width=".6"/><rect x="0" y="10" width="14" height="4" fill="#0a0a0a"/><rect x="0" y="11" width="7" height="2" fill="#0e8080"/><rect x="7" y="11" width="6.300" height="2" fill="#fff"/></svg><div class="tt" style="left:100px">自然层2(标准层1)</div></div>
<div class="tr" style="top:192px"><svg style="left:80px;top:5px" width="14" height="14" viewBox="0 0 14 14"><rect x="0" y="0" width="14" height="4" fill="#0a0a0a"/><rect x="0" y="1" width="7" height="2" fill="#0e8080"/><rect x="7" y="1" width="6.300" height="2" fill="#fff"/><rect x="0" y="5.800" width="7" height="3.200" fill="#0e8080"/><rect x="7" y="6.100" width="6.600" height="2.600" fill="#fff" stroke="#444" stroke-width=".6"/><rect x="0" y="10" width="14" height="4" fill="#0a0a0a"/><rect x="0" y="11" width="7" height="2" fill="#0e8080"/><rect x="7" y="11" width="6.300" height="2" fill="#fff"/></svg><div class="tt" style="left:100px">自然层3(标准层1)</div></div>
<div class="tr" style="top:216px"><div class="ex" style="left:45px"></div><svg style="left:60px;top:4px" width="16" height="16" viewBox="0 0 16 16"><path d="M8 1.500l7.500 3.500-7.500 3.500-7.500-3.500z" fill="#6a6a6a"/><path d="M.5 8l7.500 3.500 7.500-3.500M.5 11l7.500 3.500 7.500-3.500" fill="none" stroke="#9a9a9a" stroke-width="1.200"/></svg><div class="tt" style="left:81px">标准层</div></div>
<div class="tr sel" style="top:240px"><svg style="left:80px;top:5px" width="14" height="14" viewBox="0 0 14 14"><rect x="0" y="0" width="14" height="4" fill="#0a0a0a"/><rect x="0" y="1" width="7" height="2" fill="#0e8080"/><rect x="7" y="1" width="6.300" height="2" fill="#fff"/><rect x="0" y="5.800" width="7" height="3.200" fill="#0e8080"/><rect x="7" y="6.100" width="6.600" height="2.600" fill="#fff" stroke="#444" stroke-width=".6"/><rect x="0" y="10" width="14" height="4" fill="#0a0a0a"/><rect x="0" y="11" width="7" height="2" fill="#0e8080"/><rect x="7" y="11" width="6.300" height="2" fill="#fff"/></svg><div class="tt" style="left:100px">标准层1</div></div>
</div></div>
<style>
#vtb{left:390px;top:130px;width:1296px;height:30px;background:#f0f0f0}
#vp{left:390px;top:160px;width:1297px;height:798px;background:#e4e4e4;border:1px solid #fafafa;border-top:none}
#redge{left:1687px;top:128px;width:1px;height:861px;background:#c8c8c8}
.co{position:absolute;background:#5a5a5a;border-radius:3px;color:#fff;font-size:27px;line-height:54px;height:48px;width:126px;padding-left:5px;white-space:nowrap;letter-spacing:.4px;font-weight:400}
.co:before{content:"";position:absolute;left:-5px;top:19px;border-right:6px solid #595959;border-top:5px solid transparent;border-bottom:5px solid transparent}
.cn{position:absolute;width:20px;height:20px;border-radius:50%;background:#f21af0;color:#fff;font-size:11px;line-height:20px;text-align:center}
#cmd{left:822px;top:931px;width:433px;height:24px;border:2px solid #8e8e8e;background:#f3f3f3}
#cmd .t{position:absolute;left:11px;top:0;line-height:20px;font-size:14px;color:#9a9a9a;white-space:nowrap}
</style>
<div id="vtb" class="abs"></div>
<div id="vp" class="abs"></div>
<div id="redge" class="abs"></div>
<!--MODEL--><svg style="left:0;top:0" width="1688" height="1013" viewBox="0 0 1688 1013">
<path d="M1053 375.400L1363 622" stroke="#a9bcbc" stroke-width="1.600" fill="none"/>
<polygon points="1343,634 1351,640 1351,953.500 1343,947.500" fill="#777170"/>
<polygon points="1351,646 1356,642 1356,950.500 1351,953.500" fill="#8d8987"/>
<polygon points="1356,641 1364,636 1364,944.500 1356,951" fill="#ad9972"/>
<path d="M1361 640V947" stroke="#9a875f" stroke-width="1.200"/>
<polygon points="987,392 1085,429 1110,449 1245,627 1285,599 1345,645 1345,948 987,667" fill="#777170"/>
<polygon points="1057,440 1110,449 1290,600 1345,645 1345,948 1057,722" fill="#777170"/>
<polygon points="987,367.0 995.500,373.7 995.500,673.7 987,667.0" fill="#8d8987"/>
<polygon points="995.500,373.7 1001.300,378.3 1001.300,678.3 995.500,673.7" fill="#7f7b79"/>
<polygon points="1001.300,378.3 1034.200,404.1 1034.200,682.700 1001.300,658.300" fill="#817c79"/>
<polygon points="1001.300,658.300 1034.200,682.700 1034.200,704.1 1001.300,678.3" fill="#7b7775"/>
<polygon points="1034.200,404.1 1057.300,422.3 1057.300,722.3 1034.200,704.1" fill="#777170"/>
<path d="M992 370.9V670.9" stroke="#858180" stroke-width="1"/>
<path d="M995.5 373.7V673.7" stroke="#76726f" stroke-width="1"/>
<path d="M1001.3 378.3V658.3" stroke="#5f5b59" stroke-width="1"/>
<path d="M1034.2 404.1V682.7" stroke="#5f5b59" stroke-width="1"/>
<path d="M1053.5 419.3V672.4" stroke="#625e5c" stroke-width="1"/>
<path d="M1057.3 422.3V672.0" stroke="#625e5c" stroke-width="1"/>
<path d="M1001.300 658.300L1034.200 682.700L1053.500 672.400" fill="none" stroke="#5f5b59" stroke-width="1"/>
<path d="M1055 671.400L1344.500 899.800" stroke="#67635f" stroke-width="1"/>
<polygon points="987,659 995.500,665.500 1350,944 1352,955 987,667" fill="#85817f"/>
<path d="M987.0 667.0L1352.0 955.0" stroke="#6a6664" stroke-width="1"/>
<path d="M990.6 664.0L1352.0 951.7" stroke="#9a9694" stroke-width="1"/>
<path d="M994.2 661.0L1352.0 948.4" stroke="#6f6b69" stroke-width="1"/>
<path d="M997.8 658.0L1352.0 945.1" stroke="#8d8987" stroke-width="1"/>
<path d="M1343.300 636V947.500" stroke="#5f5b59" stroke-width="1"/>
<path d="M1351 648V953M1356 645V950.500" stroke="#6f6b69" stroke-width=".8"/>
<polygon points="1101.800,417.400 1103.500,416.500 1134,441 1122,449 1097.400,427.800" fill="#c6dddd"/>
<polygon points="1085.500,428.800 1093.400,424.800 1097.400,427.800 1122,449 1113,454" fill="#d0b67e"/>
<polygon points="1085.500,428.800 1093.400,424.800 1098,428.500 1090.500,433" fill="#bfa468"/>
<polygon points="1077,434 1085.500,428.800 1113,454 1106,459" fill="#928e8c"/>
<path d="M1080 432.500L1108 457M1082.500 431L1110.500 455.500" stroke="#7b7775" stroke-width=".8"/>
<polygon points="1290,595 1304,589 1360,628 1363.500,638 1351,651 1337,640.500" fill="#ccb27c"/>
<polygon points="1284,598.500 1292.800,592.800 1345.200,634.800 1356,645 1351,651 1337,640.500" fill="#8f8b89"/>
<path d="M1286 597L1352 649.500M1288.500 595L1354 647" stroke="#7b7775" stroke-width=".8"/>
<polygon points="1292.800,592.800 1298.300,588.400 1352.600,629.900 1363.500,638 1356,643.500 1345.200,634.800" fill="#ccb27c"/>
<polygon points="1304,590 1307.500,581 1362.400,622.400 1352.600,629.900" fill="#c5dddd"/>
<polygon points="1352.600,629.900 1362.400,622.400 1363.500,638 1356,643.500 1352.600,641" fill="#a9bdb6" fill-opacity=".75"/>
<path d="M1307.500 581L1362.400 622.400V638M1352.600 629.900V641" stroke="#9fb5b5" stroke-width=".9" fill="none"/>
<polygon points="951,386.300 1038.500,455.800 1038.500,464.400 951,394.800" fill="#7d7d7d"/>
<polygon points="1038.500,455.800 1101.800,417.400 1101.800,425.400 1038.500,464.400" fill="#8c8c8c"/>
<polygon points="951,386.300 1013,346.800 1101.800,417.400 1038.500,455.800" fill="#e9e9e9" stroke="#8d9797" stroke-width=".9"/>
<polygon points="1069,480 1245.400,619.200 1245.400,627.400 1069,488" fill="#7d7d7d"/>
<polygon points="1245.400,619.200 1307.500,581 1307.500,588.400 1245.400,627.400" fill="#8c8c8c"/>
<polygon points="1069,480 1131,441 1307.500,581 1245.400,619.200" fill="#e9e9e9" stroke="#8d9797" stroke-width=".9"/>
<path d="M1219 510L1157.700 549.300" stroke="#6f6f6f" stroke-width="1.400"/>
<path d="M1157.700 549.300v8" stroke="#6a6a6a" stroke-width="1.200"/>
<text x="0" y="0" transform="matrix(.783,.623,-.74,.67,1178,421)" font-family="'Liberation Serif',serif" font-size="20.500" fill="#f6f6f6" fill-opacity=".95" textLength="86" lengthAdjust="spacing">WQ-4133</text>
<polygon points="1625.700,188.500 1620.500,199.500 1631,199.500" fill="#3c3cc0"/>
<polygon points="1593.500,240.500 1600,233 1609,229 1611,233 1603,240" fill="#d93a3a"/>
<polygon points="1644,238 1651,234.500 1656,243.500" fill="#3cd24a"/>
<polygon points="1632,192.400 1654,209.300 1629.500,224.500 1608.400,207" fill="#a2a2a2"/>
<polygon points="1608.400,207 1629.500,224.500 1629.500,247.800 1608.400,231.500" fill="#9a9a9a"/>
<polygon points="1629.500,224.500 1654,209.300 1654,234 1629.500,247.800" fill="#949494"/>
<text transform="matrix(.85,-.53,.79,.61,1634.800,211.500)" font-family="'Noto Serif CJK SC',serif" font-size="14" fill="#5e5e5e" text-anchor="middle">下</text>
<text transform="matrix(.79,.61,0,1,1619,232.500)" font-family="'Noto Serif CJK SC',serif" font-size="14" fill="#666" text-anchor="middle">右</text>
<text transform="matrix(.87,-.49,0,1,1642,234.500)" font-family="'Noto Serif CJK SC',serif" font-size="14" fill="#5e5e5e" text-anchor="middle">后</text>
<text x="1626" y="184" font-family="'Liberation Sans',sans-serif" font-weight="bold" font-size="14" fill="#7878ee" text-anchor="middle">Z</text>
<text x="1665.500" y="255.500" font-family="'Liberation Sans',sans-serif" font-weight="bold" font-size="13" fill="#6ae870" text-anchor="middle">Y</text>
<path d="M1577.500 243l9.500 9.500M1587 243l-9.500 9.500" stroke="#f07c7c" stroke-width="1.800"/>
</svg><!--/MODEL-->
<div class="cn" style="left:789px;top:418px">2</div>
<div class="co" style="left:818px;top:404px">墙边扩大</div>
<div class="cn" style="left:1281px;top:455px">1</div>
<div class="co" style="left:1310px;top:441px">缺口合并</div>
<div id="cmd" class="abs"><div class="t">在此输入命令<span style="letter-spacing:1.500px">... &lt;</span>隐藏<span style="letter-spacing:1.400px">:Ctrl+F12&gt;</span></div>
<svg style="left:383px;top:1px" width="46" height="18" viewBox="0 0 46 18"><circle cx="11.500" cy="6.500" r="4.200" fill="none" stroke="#8fa6c4" stroke-width="1.300"/><path d="M8.500 9.500L4 15" stroke="#8fa6c4" stroke-width="1.600"/><path d="M24 -1v22" stroke="#8e8e8e" stroke-width="2"/><path d="M35.500 4.500l5.500 9h-11z" fill="#8c8c8c"/></svg>
</div>
<style>
#dlg{left:322px;top:167px;width:357px;height:761px;border:1px solid #2e2723;border-radius:7px;
 background:linear-gradient(180deg,#ecd3c0 0,#e6c6ae 30px,#e2bfa6 200px,#d9b69c 500px,#d2ad93 100%);box-shadow:inset 1px 1px 0 #fbeee4,inset -1px -1px 0 #c9a58c}
#dlg .glow{position:absolute;left:2px;top:2px;width:140px;height:26px;background:radial-gradient(ellipse at 30% 50%,rgba(255,255,255,.85),rgba(255,255,255,0) 70%)}
#dlg .ttl{position:absolute;left:7px;top:6px;font-size:12px;line-height:16px;color:#111;white-space:nowrap}
#dcl{position:absolute;left:6px;top:28px;width:343px;height:725px;background:#f0f0f0;border:1px solid #5d4d43;border-right-color:#fff;border-bottom-color:#fff;box-shadow:inset 1px 1px 0 #fff,inset 2px 2px 0 #a0a0a0}
#dlg .xb{position:absolute;left:302px;top:0;width:47px;height:19px;border:1px solid #4a2a22;border-top:none;border-radius:0 0 5px 5px;
 background:linear-gradient(#f3b3a3 0,#e08a76 45%,#cf4a2c 50%,#c8432a 75%,#e58c6e 100%);box-shadow:inset 0 0 0 1px rgba(255,255,255,.45)}
.dt{position:absolute;font-family:"Liberation Sans","Noto Sans CJK SC",sans-serif;font-size:12px;line-height:14px;color:#000;white-space:nowrap;font-weight:400}
.sh{position:absolute;left:9px;width:339px;height:20px;background:#a9a9a9}
.sh .dt{left:1px;top:5px}
.inp{position:absolute;background:#fff;border:1px solid #dcdcdc;box-shadow:inset 0 0 0 1px #f6f6f6;font-size:11px;line-height:14px;color:#000;padding:2px 0 0 3px;font-family:"Liberation Sans",sans-serif}
.inb{position:absolute;background:#fff;border:1px solid #555;font-size:11px;line-height:14px;color:#000;padding:2px 0 0 3px;font-family:"Liberation Sans",sans-serif}
.img{position:absolute;background:#f6f6f6}
.rl{font-family:"Liberation Sans","Noto Sans CJK SC",sans-serif;font-size:10.500px;fill:#e04a4a}
.btn{position:absolute;height:21px;width:73px;border:1px solid #707070;border-radius:3px;background:linear-gradient(#f4f4f4 0,#ededed 48%,#dedede 52%,#d2d2d2 100%);box-shadow:inset 0 0 0 1px #fbfbfb;text-align:center}
.rad{position:absolute;width:12px;height:12px;border-radius:50%;border:1px solid #7f8080;background:radial-gradient(circle at 50% 45%,#fdfdfd 0,#ececec 45%,#c9c9c9 100%)}
.rad.on:after{content:"";position:absolute;left:2px;top:2px;width:6px;height:6px;border-radius:50%;background:radial-gradient(circle at 35% 30%,#7fd3f7,#1a6fb0 60%,#0c4a80)}
</style>
<div id="dlg" class="abs"><div class="glow"></div><div class="ttl dt" style="position:absolute">缺口调整</div>
<div class="xb"><svg style="left:17px;top:4px" width="12" height="11" viewBox="0 0 12 11"><path d="M1.500 1.500l9 8M10.500 1.500l-9 8" stroke="#3b3f55" stroke-width="4" stroke-linecap="round"/><path d="M1.500 1.500l9 8M10.500 1.500l-9 8" stroke="#fff" stroke-width="2.400" stroke-linecap="round"/></svg></div>
<div id="dcl"></div>
<div class="sh" style="top:30px;height:20px"><div class="dt">内墙/内叶墙缺口设置</div></div>
<svg style="left:338px;top:34px" width="7" height="10" viewBox="0 0 7 10"><path d="M.5 .8L3.500 3.800 6.500 .8M.5 5L3.500 8 6.500 5" fill="none" stroke="#000" stroke-width="1.500"/></svg>
<div class="sh" style="top:332px;height:20px"><div class="dt">外叶墙/保温层缺口设置</div></div>
<svg style="left:338px;top:336px" width="7" height="10" viewBox="0 0 7 10"><path d="M.5 .8L3.500 3.800 6.500 .8M.5 5L3.500 8 6.500 5" fill="none" stroke="#000" stroke-width="1.500"/></svg>
<div class="sh" style="top:622px;height:19px"><div class="dt">生效范围</div></div>
<svg style="left:338px;top:626px" width="7" height="10" viewBox="0 0 7 10"><path d="M.5 .8L3.500 3.800 6.500 .8M.5 5L3.500 8 6.500 5" fill="none" stroke="#000" stroke-width="1.500"/></svg>
<div class="img" style="left:45px;top:72px;width:260px;height:141px"></div>
<div class="dt" style="left:41.5px;top:222.5px">墙厚方向保留厚度b1</div>
<div class="inp" style="left:158.5px;top:220px;width:35px;height:20px">0</div>
<div class="dt" style="left:41.5px;top:253.5px">缺口净距d1&lt;</div>
<div class="inp" style="left:116.5px;top:249px;width:35px;height:20px">50</div>
<div class="dt" style="left:158.5px;top:253.5px">时，相邻缺口贯通合并</div>
<div class="dt" style="left:41.5px;top:285px">缺口边距d2&lt;</div>
<div class="inp" style="left:116.5px;top:282px;width:35px;height:20px">50</div>
<div class="dt" style="left:158.5px;top:285px">时，缺口扩大到墙边</div>
<div class="img" style="left:47px;top:371px;width:260px;height:167px"></div>
<div class="dt" style="left:41.5px;top:550px">缺口净距d1&lt;</div>
<div class="inp" style="left:116px;top:546.5px;width:33px;height:20px">50</div>
<div class="dt" style="left:155px;top:550px">时，相邻缺口贯通合并</div>
<div class="dt" style="left:41.5px;top:577.5px">缺口边距d2&lt;</div>
<div class="inp" style="left:116px;top:577px;width:33px;height:19px">50</div>
<div class="dt" style="left:155px;top:579.5px">时，缺口扩大到外叶板边</div>
<div style="position:absolute;left:8px;top:330px;width:344px;height:292px;border:3px solid #f58634"></div>
<div style="position:absolute;left:34px;top:542.5px;width:256px;height:29px;border:3px solid #1f7c24"></div>
<div style="position:absolute;left:33px;top:573.5px;width:259px;height:29px;border:3px solid #1f7c24"></div>
<div class="rad" style="left:51px;top:666.3px"></div>
<div class="dt" style="left:67px;top:665.5px">全楼</div>
<div class="rad" style="left:143px;top:666.3px"></div>
<div class="dt" style="left:159px;top:665.5px">本层</div>
<div class="rad on" style="left:236px;top:666.3px"></div>
<div class="dt" style="left:252px;top:665.5px">选中构件</div>
<div style="position:absolute;left:9px;top:702px;width:340px;height:1px;background:#8c8c8c"></div>
<div class="btn" style="left:139px;top:722px"><div class="dt" style="position:static;line-height:20px">生成</div></div>
<div class="btn" style="left:247px;top:722px"><div class="dt" style="position:static;line-height:20px">关闭</div></div>
<svg style="left:-1px;top:-1px" width="357" height="761" viewBox="322 167 357 761">
<path d="M419.1 249.0L419.1 257.5" stroke="#444" stroke-width="1.2"/>
<text x="426.0" y="258.0" class="rl" style="fill:#444;font-size:11px">A</text>
<path d="M419.1 352.5L419.1 361.0" stroke="#444" stroke-width="1.2"/>
<text x="426.0" y="361.5" class="rl" style="fill:#444;font-size:11px">A</text>
<path d="M411.700 263.500H374.500V303l-2 2 3.500 2-1.500 2V347.500" fill="none" stroke="#9a9a9a" stroke-width="1"/>
<path d="M425.400 263.500H463.500V303l2 2-3.500 2 1.500 2V347.500" fill="none" stroke="#9a9a9a" stroke-width="1"/>
<rect x="411.7" y="263.0" width="13.7" height="63.6" fill="#8fc9c9"/>
<rect x="417.5" y="272.5" width="7.9" height="16.5" fill="#f6f6f6"/>
<rect x="417.5" y="300.5" width="7.9" height="16.5" fill="#f6f6f6"/>
<rect x="421.7" y="274.8" width="41.8" height="11.9" fill="#9d9df4"/>
<rect x="421.7" y="302.6" width="41.8" height="12.2" fill="#9d9df4"/>
<rect x="374.5" y="336.6" width="89.0" height="11.1" fill="#8fc9c9"/>
<rect x="400.7" y="336.6" width="36.2" height="11.1" fill="#f8cf70"/>
<rect x="411.7" y="326.6" width="13.7" height="10.4" fill="#f8cf70"/>
<path d="M415 263.500l2.500-3.500 2 4.500 2-1" fill="none" stroke="#9a9a9a" stroke-width=".8"/>
<path d="M432.8 285.0L432.8 305.0" stroke="#17a017" stroke-width="1"/>
<path d="M432.8 0.0L432.8 0.0" stroke="#17a017" stroke-width="1"/>
<path d="M429.5 286.7L436.0 286.7" stroke="#17a017" stroke-width="1"/>
<path d="M429.5 302.6L436.0 302.6" stroke="#17a017" stroke-width="1"/>
<path d="M432.8 313.0L432.8 329.0" stroke="#17a017" stroke-width="1"/>
<path d="M429.5 314.8L436.0 314.8" stroke="#17a017" stroke-width="1"/>
<path d="M429.5 326.6L436.0 326.6" stroke="#17a017" stroke-width="1"/>
<text x="439.0" y="299.0" class="rl">d1</text>
<text x="439.0" y="327.3" class="rl">d2</text>
<text x="393.0" y="311.0" class="rl">b1</text>
<path d="M407.5 301.3L421.0 301.3" stroke="#17a017" stroke-width="1"/>
<path d="M411.7 299.0L411.7 313.6" stroke="#17a017" stroke-width="1"/>
<path d="M416.5 299.0L416.5 313.6" stroke="#17a017" stroke-width="1"/>
<text x="405.5" y="378.0" class="rl">俯视图</text>
<text x="527.0" y="378.0" class="rl">A-A剖面</text>
<text x="480.0" y="270.5" class="rl">d2</text>
<text x="498.0" y="270.5" class="rl">e1</text>
<text x="520.5" y="270.5" class="rl">e1</text>
<text x="535.5" y="270.5" class="rl">d1</text>
<text x="552.0" y="270.5" class="rl">e1</text>
<text x="577.0" y="270.5" class="rl">e1</text>
<path d="M478.0 279.2L509.5 279.2" stroke="#17a017" stroke-width="1"/>
<path d="M525.0 279.2L561.5 279.2" stroke="#17a017" stroke-width="1"/>
<path d="M577.0 279.2L590.5 279.2" stroke="#17a017" stroke-width="1"/>
<path d="M480.2 276.5L480.2 291.7" stroke="#17a017" stroke-width="1"/>
<path d="M500.2 276.5L500.2 291.7" stroke="#17a017" stroke-width="1"/>
<path d="M507.6 276.5L507.6 291.7" stroke="#17a017" stroke-width="1"/>
<path d="M527.2 276.5L527.2 291.7" stroke="#17a017" stroke-width="1"/>
<path d="M533.5 276.5L533.5 291.7" stroke="#17a017" stroke-width="1"/>
<path d="M553.1 276.5L553.1 291.7" stroke="#17a017" stroke-width="1"/>
<path d="M559.7 276.5L559.7 291.7" stroke="#17a017" stroke-width="1"/>
<path d="M579.0 276.5L579.0 291.7" stroke="#17a017" stroke-width="1"/>
<path d="M585.6 276.5L585.6 291.7" stroke="#17a017" stroke-width="1"/>
<rect x="479.8" y="293.9" width="125.1" height="53.6" fill="#8fc9c9"/>
<rect x="500.2" y="293.0" width="33.3" height="33.6" fill="#f6f6f6"/>
<rect x="553.1" y="293.0" width="32.5" height="33.6" fill="#f6f6f6"/>
<rect x="507.6" y="293.9" width="19.6" height="26.9" fill="#9d9df4"/>
<rect x="507.6" y="293.9" width="19.6" height="6.9" fill="#c2c2fa"/>
<rect x="559.7" y="293.9" width="19.3" height="26.9" fill="#9d9df4"/>
<rect x="559.7" y="293.9" width="19.3" height="6.9" fill="#c2c2fa"/>
<path d="M604.900 293.500V313l2 1.500-3.500 2 1.500 2V347" fill="none" stroke="#9a9a9a" stroke-width=".9"/>
<path d="M538 347l2-3 2.500 4.500 1.500-1.500" fill="none" stroke="#9a9a9a" stroke-width=".9"/>
<text x="476.0" y="328.0" class="rl">e2</text>
<path d="M496.5 317.0L496.5 330.0" stroke="#17a017" stroke-width="1"/>
<path d="M492.5 320.3L503.0 320.3" stroke="#17a017" stroke-width="1"/>
<path d="M492.5 326.6L503.0 326.6" stroke="#17a017" stroke-width="1"/>
<text x="598.0" y="331.0" class="rl">e2</text>
<path d="M592.5 317.0L592.5 330.0" stroke="#17a017" stroke-width="1"/>
<path d="M584.0 320.3L596.0 320.3" stroke="#17a017" stroke-width="1"/>
<path d="M584.0 326.6L596.0 326.6" stroke="#17a017" stroke-width="1"/>
<text x="385.0" y="568.5" class="rl">e1</text>
<text x="385.0" y="588.0" class="rl">e1</text>
<text x="385.0" y="600.0" class="rl">d1</text>
<text x="385.0" y="611.0" class="rl">e1</text>
<text x="385.0" y="636.8" class="rl">e1</text>
<text x="385.0" y="651.0" class="rl">d2</text>
<text x="388.0" y="623.0" class="rl" style="fill:#333;font-size:11px">B</text>
<path d="M398.6 621.5L411.0 621.5" stroke="#444" stroke-width="1.2"/>
<path d="M449.0 621.5L461.5 621.5" stroke="#444" stroke-width="1.2"/>
<text x="464.5" y="623.0" class="rl" style="fill:#333;font-size:11px">B</text>
<path d="M405.0 559.2L405.0 570.4" stroke="#17a017" stroke-width="1"/>
<path d="M405.0 582.5L405.0 611.0" stroke="#17a017" stroke-width="1"/>
<path d="M405.0 626.6L405.0 654.2" stroke="#17a017" stroke-width="1"/>
<path d="M401.3 561.4L417.7 561.4" stroke="#17a017" stroke-width="1"/>
<path d="M401.3 566.4L417.7 566.4" stroke="#17a017" stroke-width="1"/>
<path d="M401.3 586.8L417.7 586.8" stroke="#17a017" stroke-width="1"/>
<path d="M401.3 592.0L417.7 592.0" stroke="#17a017" stroke-width="1"/>
<path d="M401.3 604.6L417.7 604.6" stroke="#17a017" stroke-width="1"/>
<path d="M401.3 609.8L417.7 609.8" stroke="#17a017" stroke-width="1"/>
<path d="M401.3 630.0L417.7 630.0" stroke="#17a017" stroke-width="1"/>
<path d="M401.3 635.2L417.7 635.2" stroke="#17a017" stroke-width="1"/>
<path d="M401.3 649.4L417.7 649.4" stroke="#17a017" stroke-width="1"/>
<path d="M447.900 550.500H475.500V611l3 1.500-5 2.500 2 2V676" fill="none" stroke="#9a9a9a" stroke-width="1"/>
<rect x="434.1" y="549.7" width="13.8" height="91.3" fill="#8fc9c9"/>
<path d="M437 550l2.500-3 2 4 2-1.500" fill="none" stroke="#9a9a9a" stroke-width=".8"/>
<rect x="421.9" y="549.7" width="6.1" height="12.2" fill="#8fc9c9"/>
<rect x="428.0" y="549.7" width="6.1" height="12.2" fill="#9d9df4"/>
<rect x="421.9" y="591.9" width="6.1" height="12.8" fill="#8fc9c9"/>
<rect x="428.0" y="591.9" width="6.1" height="12.8" fill="#9d9df4"/>
<rect x="421.9" y="634.7" width="6.1" height="14.4" fill="#8fc9c9"/>
<rect x="428.0" y="634.7" width="6.1" height="14.4" fill="#9d9df4"/>
<rect x="413.9" y="565.9" width="20.2" height="22.0" fill="#f4b4c0"/>
<rect x="413.9" y="608.7" width="20.2" height="21.4" fill="#f4b4c0"/>
<rect x="421.9" y="654.3" width="53.5" height="21.4" fill="#8fc9c9"/>
<rect x="428.0" y="663.8" width="47.4" height="6.7" fill="#9d9df4"/>
<rect x="452.5" y="663.0" width="9.8" height="13.0" fill="#f6f6f6"/>
<rect x="455.8" y="654.3" width="3.4" height="21.7" fill="#f6f6f6"/>
<rect x="459.2" y="654.3" width="16.2" height="9.5" fill="#8fc9c9"/>
<rect x="462.3" y="663.8" width="13.1" height="6.7" fill="#9d9df4"/>
<rect x="459.2" y="670.5" width="16.2" height="5.2" fill="#8fc9c9"/>
<rect x="434.1" y="640.9" width="13.8" height="22.9" fill="#f8cf70"/>
<rect x="434.1" y="654.3" width="25.1" height="9.5" fill="#f8cf70"/>
<text x="418.0" y="696.0" class="rl">俯视图</text>
<text x="521.3" y="696.0" class="rl">B-B剖面</text>
<path d="M511.0 551.2L562.0 551.2" stroke="#9a9a9a" stroke-width="1"/>
<path d="M509.0 674.2L565.0 674.2" stroke="#9a9a9a" stroke-width="1"/>
<rect x="521.0" y="551.2" width="14.1" height="46.5" fill="#8fc9c9"/>
<rect x="535.1" y="551.2" width="8.3" height="46.5" fill="#9d9df4"/>
<rect x="543.4" y="551.2" width="7.0" height="53.5" fill="#9fd0d0" stroke="#7d9c9c" stroke-width=".6"/>
<path d="M538 551l2.500-3 2 4 2-1.500" fill="none" stroke="#9a9a9a" stroke-width=".8"/>
<rect x="521.0" y="625.6" width="14.1" height="48.6" fill="#8fc9c9"/>
<rect x="535.1" y="630.8" width="8.3" height="43.4" fill="#9d9df4"/>
<rect x="543.4" y="630.8" width="7.0" height="43.4" fill="#8fc9c9"/>
<path d="M538 674l2.500 3 2-4 2 1.500" fill="none" stroke="#9a9a9a" stroke-width=".8"/>
<rect x="528.1" y="610.3" width="97.0" height="11.3" fill="#f4b4c0"/>
<rect x="497.5" y="606.9" width="24.5" height="15.3" fill="#f9c178"/>
<rect x="497.5" y="606.9" width="24.5" height="6.6" fill="#fbdcae"/>
<path d="M497.500 589.500V612l-3 1.500 5 2.500-2 2V644.500" fill="none" stroke="#777" stroke-width="1"/>
<text x="590.8" y="593.5" class="rl" style="fill:#a8a8a8;font-size:8.800px" textLength="35">楼层标高</text>
<path d="M590.8 597.7L626.0 597.7" stroke="#aaa" stroke-width="0.9"/>
<path d="M587.7 603.8L609.2 603.8" stroke="#aaa" stroke-width="0.9"/>
<path d="M594.500 598.500h6l-3 4.500z" fill="none" stroke="#aaa" stroke-width=".8"/>
<path d="M563.7 599.8L563.7 611.0" stroke="#17a017" stroke-width="1"/>
<path d="M563.7 617.0L563.7 632.6" stroke="#17a017" stroke-width="1"/>
<path d="M554.5 604.6L566.2 604.6" stroke="#17a017" stroke-width="1"/>
<path d="M554.5 609.8L566.2 609.8" stroke="#17a017" stroke-width="1"/>
<path d="M554.5 620.9L566.2 620.9" stroke="#17a017" stroke-width="1"/>
<path d="M554.5 630.0L566.2 630.0" stroke="#17a017" stroke-width="1"/>
<text x="571.5" y="609.3" class="rl">e3</text>
<text x="571.5" y="631.0" class="rl">e2</text>
</svg>
<div class="inb" style="left:272.0px;top:92.0px;width:31px;height:20px">15</div>
<div class="inb" style="left:266.3px;top:167.0px;width:31px;height:20px">20</div>
<div class="inb" style="left:52.0px;top:371.0px;width:31px;height:20px">15</div>
<div class="inb" style="left:231.0px;top:407.0px;width:31px;height:20px">20</div>
<div class="inb" style="left:231.0px;top:469.0px;width:31px;height:20px">20</div>
</div>
<style>
.tbsel{position:absolute;width:24px;height:24px;background:#c9c9c9}
#btb1{left:390px;top:958px;width:223px;height:31px;background:#f0f0f0;border-radius:6px 6px 6px 6px}
#btb2{left:612px;top:958px;width:209px;height:31px;background:#f0f0f0;border-radius:6px}
.grip{position:absolute;width:2px;height:18px;background:repeating-linear-gradient(#8c8c8c 0,#8c8c8c 2px,transparent 2px,transparent 4px)}
.bsep{position:absolute;top:4px;width:1px;height:23px;background:#dadada}
#combo{position:absolute;left:147px;top:3px;width:71px;height:25px;border:1px solid #cfcfcf;background:#fff;border-radius:1px}
#combo .t{position:absolute;left:3px;top:3px;font-size:12px;line-height:17px;white-space:nowrap;color:#222}
#sb{left:8px;top:989px;width:1680px;height:24px;background:#f1f1f1;border-top:1px solid #cfcfcf}
#sb .t{position:absolute;left:29px;top:3px;font-size:12px;line-height:16px;color:#3a3a3a;white-space:nowrap;letter-spacing:.25px}
#lpb{left:8px;top:984px;width:382px;height:5px;background:#ececec}
</style>
<!-- viewport top toolbar icons -->
<div class="tbsel" style="left:531px;top:133px"></div>
<svg style="left:404px;top:136px" width="176" height="18" viewBox="0 0 176 18">
<g fill="none" stroke="#1a1a1a" stroke-width="1.300">
<!-- zoom extents -->
<path d="M1.500 5V1.500H5M12.500 1.500H16.500V5M16.500 12.500V16.500H12.500M5 16.500H1.500V12.500"/>
<circle cx="9" cy="9" r="5.200" stroke-width="1"/><path d="M9 2.500V15.500M2.500 9H15.500" stroke-width="2"/>
<!-- hand -->
<path d="M33.500 16.500L29 11.500C28.200 10.200 29.600 9.300 30.600 10.400L32.500 12.300V4.300a1.200 1.200 0 0 1 2.400 0V8V2.800a1.200 1.200 0 0 1 2.400 0V8V3.300a1.200 1.200 0 0 1 2.400 0V8.500V5.300a1.200 1.200 0 0 1 2.400 0V12C42.100 14 41.500 15 41 16.500Z" stroke-width="1.100" fill="#f6f6f6"/>
<!-- orbit -->
<path d="M61 2C65 2 68.500 6 68.500 8.500C68.500 11 64 12.500 60 12.500C56 12.500 53.500 10.500 54.500 8C55.500 5.500 58 2 61 2Z" stroke-dasharray="2.300 1.400" stroke-width="1.200"/>
<path d="M64 5l1.800 2.800 2.600-1.600M61.800 10.300l-2.800 2.200 2.800 2.200" stroke-width="1.100"/>
<path d="M59.500 14.500c.5 1.500 2 2.200 4 2" stroke-dasharray="2 1.200" stroke-width="1.100"/>
<!-- box -->
<path d="M79.500 5.500h11v11h-11zM79.500 5.500l4-4h11l-4 4M94.500 1.500v11l-4 4"/>
<!-- wire box -->
<path d="M105.500 5.500h11v11h-11zM105.500 5.500l4-4h11l-4 4M120.500 1.500v11l-4 4" stroke-width="1.200"/>
<path d="M109.500 1.500v11h11M109.500 12.500l-4 4" stroke-width=".9"/>
</g>
<!-- shaded box -->
<path d="M131.500 5.500h11v11h-11z" fill="#7db6d6" stroke="#1a1a1a" stroke-width="1"/>
<path d="M131.500 5.500l4-4h11l-4 4z" fill="#c4e6f6" stroke="#1a1a1a" stroke-width="1"/>
<path d="M142.500 5.500l4-4v11l-4 4z" fill="#3f86b8" stroke="#1a1a1a" stroke-width="1"/>
<!-- chevrons -->
<path d="M160 4l5.500 5 5.500-5M160 9l5.500 5 5.500-5" fill="none" stroke="#333" stroke-width="1.400"/>
</svg>
<!-- bottom toolbars -->
<div id="lpb" class="abs"></div>
<div id="btb1" class="abs">
<div class="grip" style="left:3px;top:5px"></div>
<div class="bsep" style="left:39px"></div><div class="bsep" style="left:73px"></div><div class="bsep" style="left:107px"></div><div class="bsep" style="left:141px"></div>
<div class="tbsel" style="left:44px;top:3px"></div><div class="tbsel" style="left:78px;top:3px"></div><div class="tbsel" style="left:112px;top:3px"></div>
<svg style="left:13px;top:6px" width="130" height="20" viewBox="0 0 130 20">
<!-- slab -->
<path d="M1.500 11.500l6-6h10l-6 6z" fill="#fff" stroke="#a9b4c2" stroke-width=".8"/><path d="M1.500 11.500h10v2.500h-10z" fill="#e4ecf5" stroke="#9fb0c6" stroke-width=".7"/><path d="M11.500 11.500l6-6v2.500l-6 6z" fill="#4a6488"/>
<!-- beam -->
<path d="M37 14l12-11h3L40 14z" fill="#fff" stroke="#8a8f98" stroke-width=".7"/><path d="M35.500 10.500l3.500.5 12-10" fill="none" stroke="#777" stroke-width=".8"/><path d="M35 10.500h4.500v2h-1.500v3h2v2h-5v-2h1.500v-3H35z" fill="#f4f4f4" stroke="#7a7f88" stroke-width=".7"/><path d="M40 15.500l12-11v2L40 17.500z" fill="#9aa2ad"/>
<!-- column -->
<path d="M72.500 5.500h5v12h-5z" fill="#eef2f7" stroke="#9aa4b2" stroke-width=".7"/><path d="M72.500 5.500l2.500-3h5l-2.500 3z" fill="#fff" stroke="#9aa4b2" stroke-width=".7"/><path d="M77.500 5.500l2.500-3v12l-2.500 3z" fill="#6b7f9c"/>
<!-- wall -->
<path d="M104.500 3.500l14 7v8l-14-7z" fill="#e3e9f1" stroke="#8e98a8" stroke-width=".8"/><path d="M104.500 3.500l3-1.500 14 7-3 1.500z" fill="#fff" stroke="#8e98a8" stroke-width=".7"/><path d="M118.500 10.500l3-1.500v8l-3 1.500z" fill="#5d7394"/>
</svg>
<div id="combo"><div class="t">精细显示</div><div class="dd" style="left:59px;top:11px;border-top-color:#555"></div></div>
</div>
<div id="btb2" class="abs">
<div class="grip" style="left:4px;top:5px"></div>
<div class="bsep" style="left:40px"></div><div class="bsep" style="left:74px"></div><div class="bsep" style="left:108px"></div><div class="bsep" style="left:142px"></div><div class="bsep" style="left:176px"></div>
<svg style="left:13px;top:6px" width="192" height="20" viewBox="0 0 192 20">
<g transform="translate(2,1)">
<path d="M1 3.500h14" stroke="#8dbde8" stroke-width="1.200"/><path d="M0 3.500l3-2.300v4.600zM16 3.500l-3-2.300v4.600z" fill="#8dbde8"/>
<rect x=".5" y="8.500" width="15" height="4" fill="#e6ebf1" stroke="#b4c0cd" stroke-width=".7"/><path d="M2.500 8.500v2M4.500 8.500v1.300M6.500 8.500v2M8.500 8.500v1.300M10.500 8.500v2M12.500 8.500v1.300M14 8.500v2" stroke="#8a98a8" stroke-width=".6"/>
</g>
<g transform="translate(36,1)">
<path d="M.5 2.500L3 .5v12L.5 14.500z" fill="#e6eaf0" stroke="#aab4c2" stroke-width=".6"/>
<path d="M3 3.500h4v8h6v4.500H3z" fill="#4f9fe6"/><path d="M3 3.500L5 1h4L7 3.500z" fill="#9fd0f8"/><path d="M7 3.500L9 1v8L7 11.500z" fill="#2f74b8"/>
<path d="M7 11.500L9 9h6l-2 2.500z" fill="#9fd0f8"/><path d="M13 11.500L15 9v4.500L13 16z" fill="#2f74b8"/><path d="M8.500 7.500h3v2.500h-3z" fill="#9aa4b4"/>
</g>
<g transform="translate(70,1)">
<path d="M1 11L7 3h3.500L4.500 11z" fill="#7cbcf2" stroke="#2f74b8" stroke-width=".6"/><path d="M1 11h3.500v2.200H1z" fill="#3f8fdc"/>
<path d="M7.500 13L13.500 4.500H16L10 13z" fill="#b4e6a6" stroke="#3f9a3f" stroke-width=".6"/><path d="M7.500 13H10v2H7.500z" fill="#5cbf58"/>
<path d="M8 1.500h4.500M11 .3l1.500 1.200L11 2.700M1 15.500h4.500M4 14.300l1.500 1.200L4 16.700" fill="none" stroke="#3aa83a" stroke-width=".9"/>
</g>
<g transform="translate(104,1)">
<path d="M4.500 3L7 .5h9v7L13.500 10h-9z" fill="#3f8fdc"/><path d="M4.500 3h9v7h-9z" fill="#5aa9ee"/><path d="M4.500 3L7 .5h9L13.500 3z" fill="#a8d4fa"/><path d="M6.500 5h5v3h-5z" fill="#2f74b8"/><path d="M7.500 5.800h1.200v1.400H7.500zM9.500 5.800h1.200v1.400H9.500z" fill="#cfe6fa"/>
<rect x=".5" y="9.500" width="11" height="6.500" fill="#8e98a8"/><path d="M2 11h2v3.500H2zM5 11h2v3.500H5zM8 11h2v3.500H8z" fill="#e4e9ef"/>
<path d="M12 13.500h3.500M14 12l1.500 1.500L14 15" fill="none" stroke="#3aa83a" stroke-width="1.200"/>
</g>
<g transform="translate(138,1)">
<path d="M.5 4.500L3.500 1h12l-3 3.500z" fill="#7cbcf2"/><path d="M4 3.500l1.500-2h3l-1.500 2zM9.500 3.500l1.500-2h3l-1.500 2z" fill="#f4cf6e" stroke="#c9a030" stroke-width=".4"/>
<path d="M.5 4.500h12V8H.5z" fill="#4f9fe6"/><path d="M12.500 4.500l3-3.500v3.500l-3 3.500z" fill="#2f74b8"/>
<path d="M.5 11L3.500 8.500h12l-3 2.500z" fill="#cfe6fa"/><path d="M.5 11h12v1.500H.5z" fill="#f4cf6e"/><path d="M.5 12.500h12V16H.5z" fill="#6eb2ee"/><path d="M12.500 11l3-2.500V12.500l-3 3.500z" fill="#3f8fdc"/>
</g>
<g transform="translate(172,1)">
<path d="M.5 6.500L3 4l13-3.500V4L4 7.500z" fill="#4f9fe6"/><path d="M.5 6.500h12V9H.5z" fill="#2f74b8"/>
<rect x="6" y="6" width="9.500" height="10" fill="#fff" stroke="#9aa8b8" stroke-width=".6"/><path d="M7.500 8c2-1.500 4 1.500 6.500 0M7.500 10c2-1.500 4 1.500 6.500 0" fill="none" stroke="#e8503a" stroke-width=".9"/>
<rect x="6" y="12" width="9.500" height="4" fill="#2f74b8"/><text x="10.800" y="15.300" font-family="Liberation Sans,sans-serif" font-weight="bold" font-size="3.600" fill="#fff" text-anchor="middle">STEP</text>
<path d="M.5 11h5M4 9.500L5.500 11 4 12.500" fill="none" stroke="#3aa83a" stroke-width="1.300"/>
</g>
</svg>
</div>
<!-- status bar -->
<div id="sb" class="abs"><div class="t">38833.46 , 1659.23 , 0.00</div>
<svg style="left:11px;top:4px" width="14" height="14" viewBox="0 0 14 14"><path d="M1 1l10.500 3.500-4 2 5 5-1.800 1.800-5-5-2 4z" fill="#58a6ea" stroke="#3d8ad2" stroke-width=".6"/></svg>
<!--SBR--><div class="abs" style="left:1091px;top:2px;width:43px;height:20px;background:#c9c9c9"></div>
<div class="abs" style="left:1156px;top:2px;width:44px;height:20px;background:#c9c9c9"></div>
<div class="abs" style="left:1234px;top:2px;width:24px;height:20px;background:#c9c9c9"></div>
<svg style="left:-8px;top:-990px" width="1688" height="1013" viewBox="0 0 1688 1013">
<g fill="none" stroke="#555" stroke-width="1.200">
<path d="M1104.600 1007.300L1115.400 996.600"/><path d="M1125 1007.500L1137 996.500"/>
<circle cx="1152.800" cy="1002" r="6.800" stroke="#444" stroke-width="1"/>
<path d="M1169 996l12.500 12M1181.500 996l-12.500 12"/>
<path d="M1190 1004.700h13.700M1197 997v7.700"/>
<path d="M1214.500 996.600h11v10.700h-11z" stroke="#333"/>
<path d="M1246.500 1004.700H1261M1246.500 1004.700L1258.700 995" stroke="#222" stroke-width="1.300"/>
</g>
<g fill="#fff" stroke="#2f86d8" stroke-width="1">
<rect x="1102.800" y="1005.500" width="3.500" height="3.500"/><rect x="1113.700" y="994.800" width="3.500" height="3.500"/>
<rect x="1129.300" y="1000.200" width="3.500" height="3.500"/><rect x="1151" y="1000.200" width="3.500" height="3.500"/>
<rect x="1173.500" y="1000.200" width="3.500" height="3.500"/><rect x="1195.300" y="1003" width="3.500" height="3.500"/>
<rect x="1212.600" y="994.700" width="3.800" height="3.800"/>
</g>
<circle cx="1253" cy="999.500" r="1.200" fill="#3ad"/>
<g fill="#111"><path d="M1233 1000h8.800l-4.400 5z"/><path d="M1267 1000h8.800l-4.400 5z" fill="#555"/><path d="M1300.700 1000h8.800l-4.400 5z"/><path d="M1333.800 1000h8.800l-4.400 5z"/></g>
<g fill="#1a7fd4">
<rect x="1282.5" y="995.3" width="2" height="2"/><rect x="1282.5" y="998.4" width="2" height="2"/><rect x="1282.5" y="1001.5" width="2" height="2"/><rect x="1282.5" y="1004.6" width="2" height="2"/><rect x="1286.8" y="995.3" width="2" height="2"/><rect x="1286.8" y="998.4" width="2" height="2"/><rect x="1286.8" y="1001.5" width="2" height="2"/><rect x="1286.8" y="1004.6" width="2" height="2"/><rect x="1291.1" y="995.3" width="2" height="2"/><rect x="1291.1" y="998.4" width="2" height="2"/><rect x="1291.1" y="1001.5" width="2" height="2"/><rect x="1291.1" y="1004.6" width="2" height="2"/>
</g>
<path d="M1316.500 996h10.500l-3.800 4.500v5.300h-3v-5.300z" fill="#2b8be0" stroke="#111" stroke-width="1"/>
<g fill="none" stroke="#3c3c3c" stroke-width="1.200">
<rect x="1421.600" y="994.600" width="14" height="13.600" rx="1.500"/><path d="M1421.600 997h14" stroke-width="1.800"/>
<rect x="1455.600" y="994.600" width="14" height="13.600" rx="1.500"/><path d="M1455.600 997h14M1462.600 995v13" stroke-width="1.600"/>
<rect x="1489.800" y="994.600" width="14.200" height="13.600" rx="1.500"/><path d="M1489.800 997h14.200M1496.500 995v13M1496.500 1001.500h7.500M1496.500 1005h7.500" stroke-width="1.500"/>
<rect x="1523.600" y="994.600" width="14" height="13.600" rx="1.500"/><path d="M1523.600 997h14M1523.600 1000.500h14M1523.600 1004.500h14" stroke-width="1.800"/>
<rect x="1557.400" y="993.700" width="15" height="15" rx="2"/>
<path d="M1560.500 1000v-3.300h3.300M1566 996.700h3.300v3.300M1569.300 1002.500v3.300h-3.300M1563.800 1005.800h-3.300v-3.300M1560.500 996.700l3 3M1569.300 996.700l-3 3M1569.300 1005.800l-3-3M1560.500 1005.800l3-3" stroke-width="1"/>
</g>
<path d="M1589.200 1001.800h7.800" stroke="#bdbdbd" stroke-width="1.600"/>
<path d="M1607 1001.500h56.600" stroke="#c4c4c4" stroke-width="1"/>
<rect x="1642.700" y="994.800" width="3.800" height="12.400" fill="#f4f4f4" stroke="#bdbdbd" stroke-width="1"/>
<path d="M1675 1001.800h8M1679 997.800v8" stroke="#bdbdbd" stroke-width="1.600"/>
</svg>
<!--/SBR-->
</div>
</body></html>
